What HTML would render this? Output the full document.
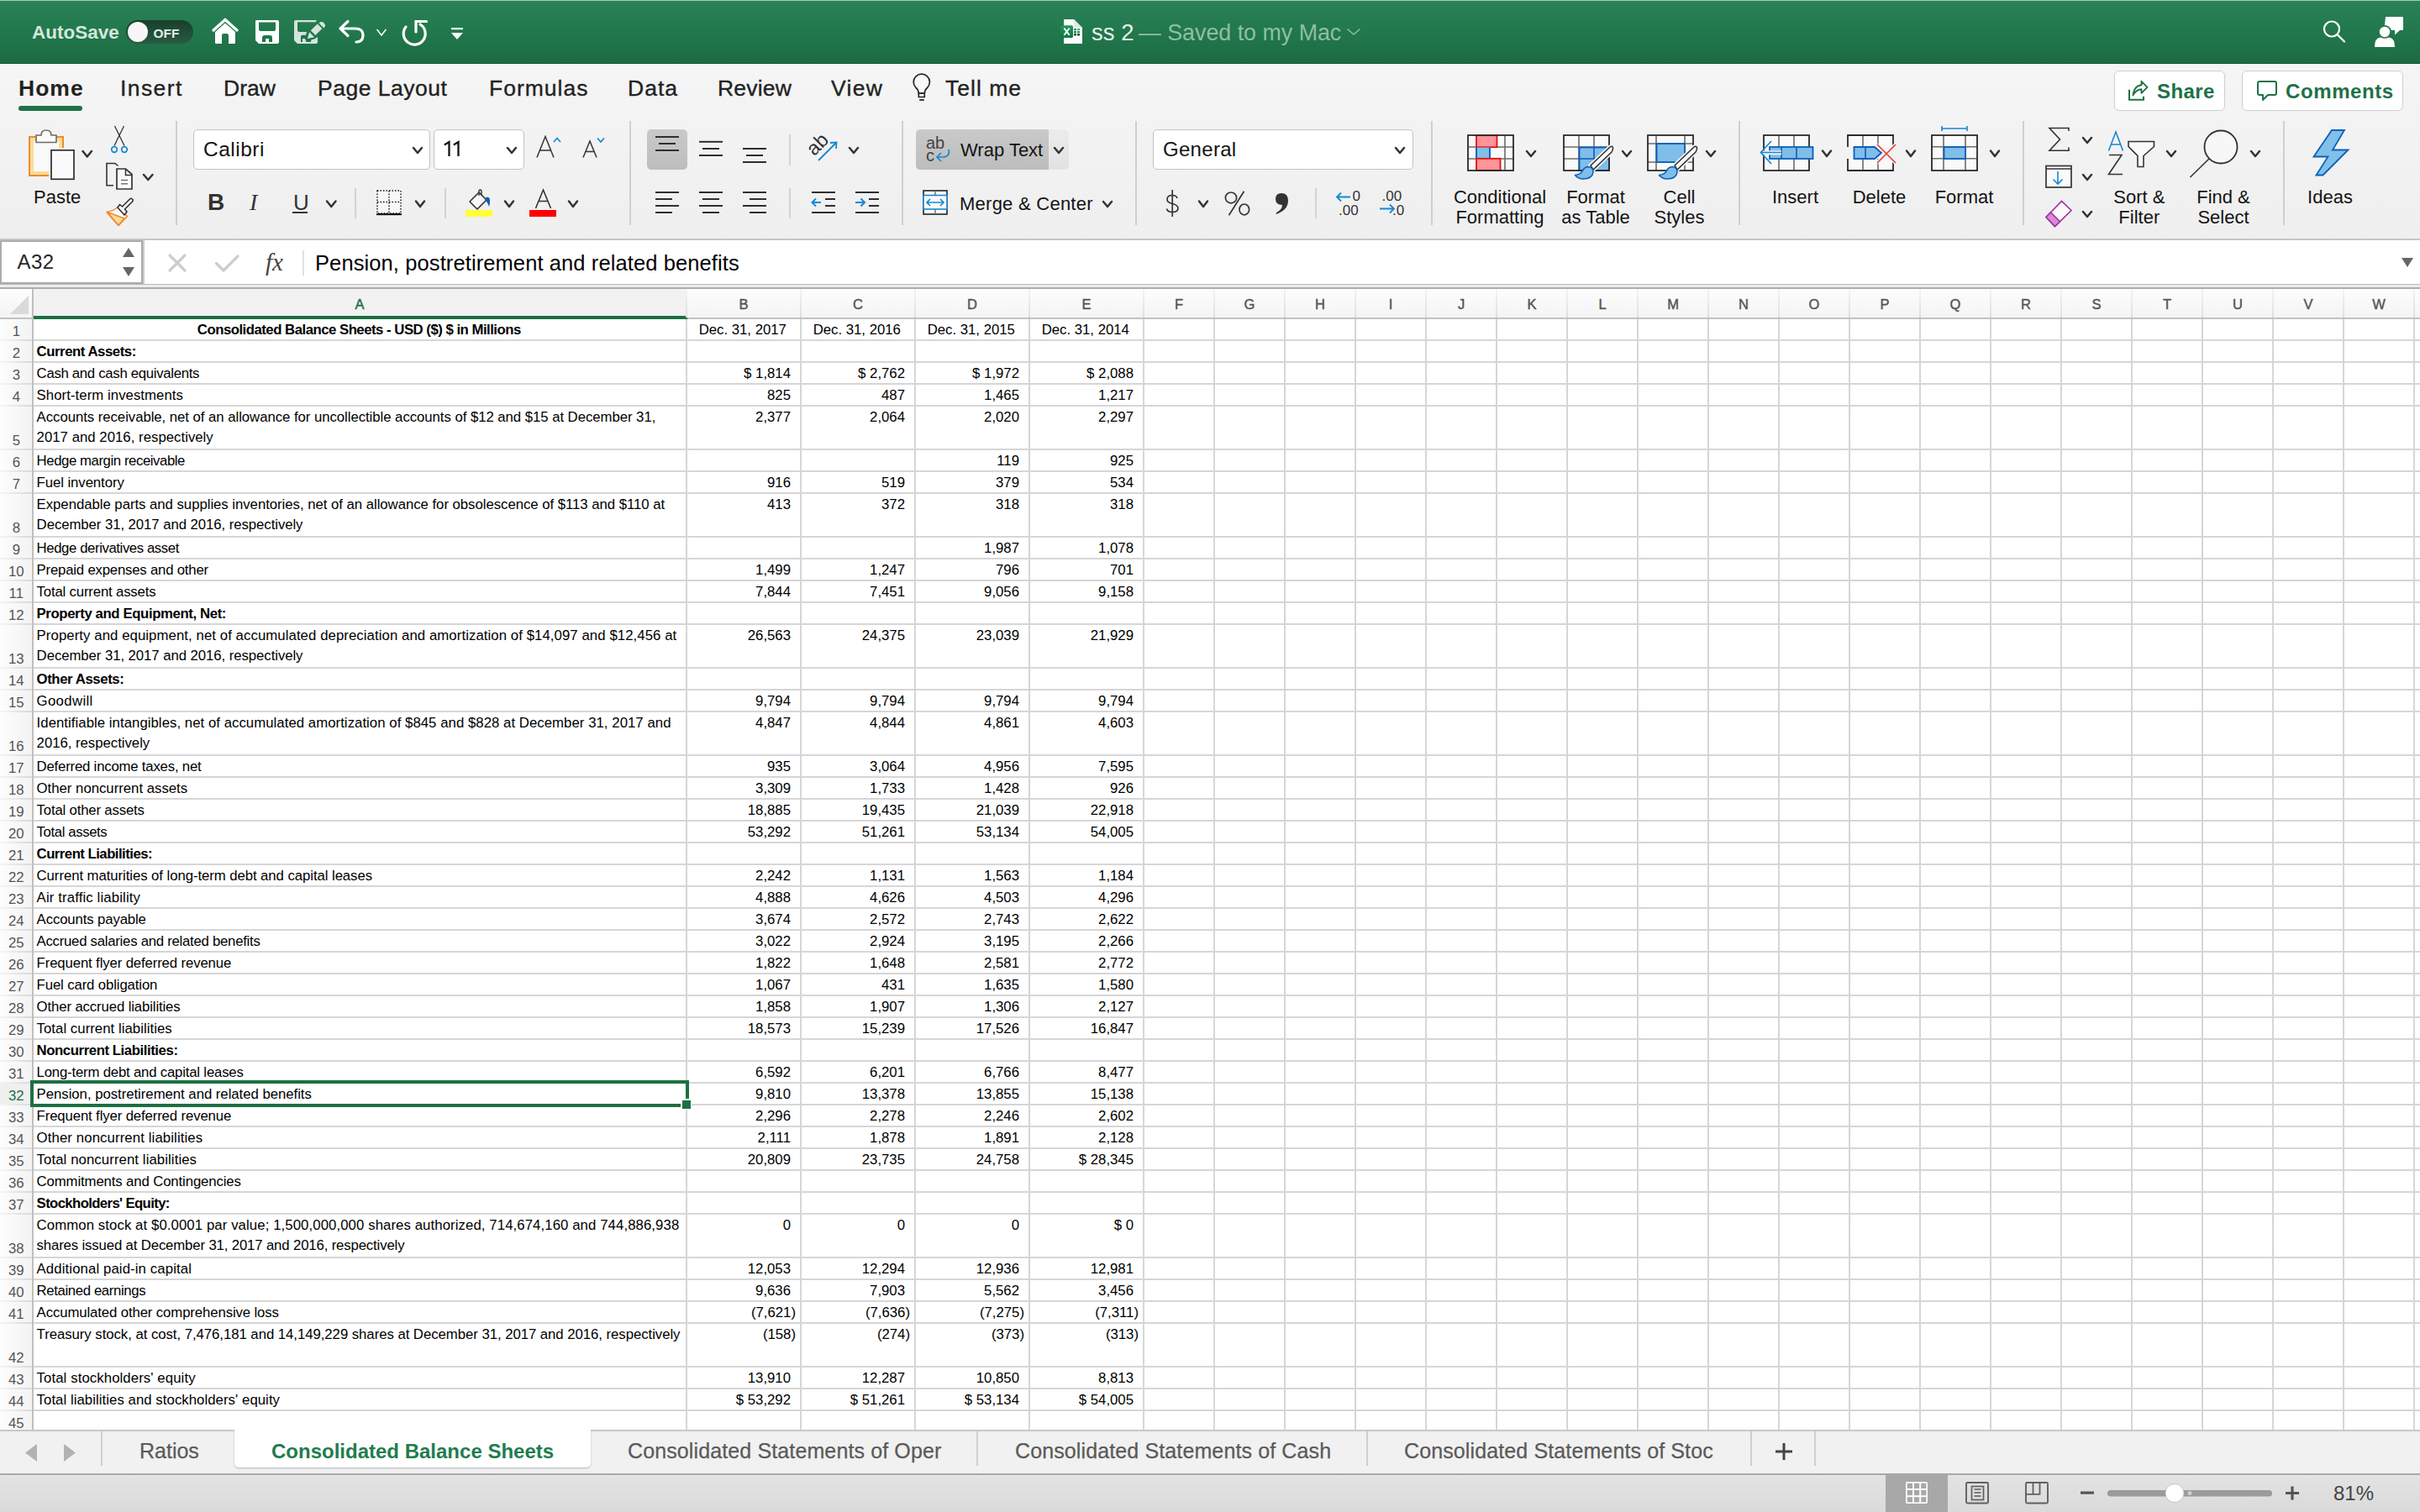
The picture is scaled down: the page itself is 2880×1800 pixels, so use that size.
<!DOCTYPE html>
<html><head><meta charset="utf-8"><style>
html,body{margin:0;padding:0;}
body{width:2880px;height:1800px;position:relative;overflow:hidden;background:#fff;font-family:"Liberation Sans",sans-serif;}
.t{position:absolute;white-space:pre;}
.r{position:absolute;}
svg.r{overflow:visible;}
</style></head><body>
<div class="r" style="left:0px;top:0px;width:2880px;height:76px;background:linear-gradient(#2c8258 0%,#237a4e 40%,#1c6b43 100%);"></div>
<div class="r" style="left:0px;top:0px;width:2880px;height:1px;background:#a6cbb6;"></div>
<div class="r" style="left:0px;top:75px;width:2880px;height:1px;background:#0f5632;"></div>
<div class="t" style="left:38px;top:27.75px;font-size:22.5px;line-height:22.5px;color:#d5e6dc;font-weight:bold;font-family:'Liberation Sans', sans-serif;">AutoSave</div>
<div class="t" style="left:1299px;top:25.25px;font-size:27.5px;line-height:27.5px;color:#e8f0eb;font-weight:normal;font-family:'Liberation Sans', sans-serif;">ss 2</div>
<div class="t" style="left:1355px;top:26.10px;font-size:26.8px;line-height:26.8px;color:#8fbfa3;font-weight:normal;font-family:'Liberation Sans', sans-serif;">— Saved to my Mac</div>
<div class="r" style="left:0px;top:76px;width:2880px;height:209px;background:linear-gradient(#f5f5f5,#efefef);"></div>
<div class="r" style="left:0px;top:284px;width:2880px;height:2px;background:#c6c6c6;"></div>
<div class="t" style="left:22px;top:92.25px;font-size:26.5px;line-height:26.5px;color:#222;font-weight:bold;font-family:'Liberation Sans', sans-serif;letter-spacing:1.0px;">Home</div>
<div class="t" style="left:143px;top:92.25px;font-size:26.5px;line-height:26.5px;color:#222;font-weight:normal;font-family:'Liberation Sans', sans-serif;letter-spacing:1.4px;-webkit-text-stroke:0.35px #222;">Insert</div>
<div class="t" style="left:266px;top:92.25px;font-size:26.5px;line-height:26.5px;color:#222;font-weight:normal;font-family:'Liberation Sans', sans-serif;letter-spacing:0px;-webkit-text-stroke:0.35px #222;">Draw</div>
<div class="t" style="left:378px;top:92.25px;font-size:26.5px;line-height:26.5px;color:#222;font-weight:normal;font-family:'Liberation Sans', sans-serif;letter-spacing:0.5px;-webkit-text-stroke:0.35px #222;">Page Layout</div>
<div class="t" style="left:582px;top:92.25px;font-size:26.5px;line-height:26.5px;color:#222;font-weight:normal;font-family:'Liberation Sans', sans-serif;letter-spacing:1.0px;-webkit-text-stroke:0.35px #222;">Formulas</div>
<div class="t" style="left:747px;top:92.25px;font-size:26.5px;line-height:26.5px;color:#222;font-weight:normal;font-family:'Liberation Sans', sans-serif;letter-spacing:1.0px;-webkit-text-stroke:0.35px #222;">Data</div>
<div class="t" style="left:854px;top:92.25px;font-size:26.5px;line-height:26.5px;color:#222;font-weight:normal;font-family:'Liberation Sans', sans-serif;letter-spacing:0.2px;-webkit-text-stroke:0.35px #222;">Review</div>
<div class="t" style="left:989px;top:92.25px;font-size:26.5px;line-height:26.5px;color:#222;font-weight:normal;font-family:'Liberation Sans', sans-serif;letter-spacing:1.3px;-webkit-text-stroke:0.35px #222;">View</div>
<div class="t" style="left:1125px;top:92.25px;font-size:26.5px;line-height:26.5px;color:#222;font-weight:normal;font-family:'Liberation Sans', sans-serif;letter-spacing:1.0px;-webkit-text-stroke:0.35px #222;">Tell me</div>
<div class="r" style="left:22px;top:126px;width:76px;height:6px;background:#1e7145;border-radius:3px;"></div>
<div class="r" style="left:0px;top:286px;width:2880px;height:52px;background:#fff;"></div>
<div class="r" style="left:0px;top:338px;width:2880px;height:1px;background:#b9b9b9;"></div>
<div class="r" style="left:0px;top:339px;width:2880px;height:3px;background:#ececec;"></div>
<div class="r" style="left:0px;top:342px;width:2880px;height:2px;background:#acacac;"></div>
<div class="r" style="left:0px;top:286px;width:170px;height:52px;background:#fff;box-sizing:border-box;border:2px solid #ababab;"></div>
<div class="r" style="left:170px;top:286px;width:2px;height:52px;background:#cbcbcb;"></div>
<div class="t" style="left:20.5px;top:300.00px;font-size:24px;line-height:24px;color:#262626;font-weight:normal;font-family:'Liberation Sans', sans-serif;letter-spacing:0.4px;">A32</div>
<div class="t" style="left:375px;top:300.75px;font-size:25.5px;line-height:25.5px;color:#000;font-weight:normal;font-family:'Liberation Sans', sans-serif;letter-spacing:0.1px;">Pension, postretirement and related benefits</div>
<div class="r" style="left:0px;top:344px;width:2880px;height:34px;background:linear-gradient(#fdfdfd,#f4f4f4);"></div>
<div class="r" style="left:40px;top:344px;width:776px;height:32px;background:#f2f2f2;"></div>
<div class="r" style="left:0px;top:378px;width:2880px;height:2px;background:#c2c2c2;"></div>
<div class="r" style="left:40px;top:376px;width:778px;height:4px;background:#1d7044;"></div>
<div class="r" style="left:38px;top:344px;width:2px;height:1358px;background:#bfbfbf;"></div>
<svg class="r" style="left:12px;top:352px" width="22" height="22" viewBox="0 0 22 22"><polygon points="22,0 22,22 0,22" fill="#dadada"/></svg>
<div class="r" style="left:816px;top:344px;width:2px;height:34px;background:linear-gradient(#f4f4f4,#dedede);"></div>
<div class="r" style="left:952px;top:344px;width:2px;height:34px;background:linear-gradient(#f4f4f4,#dedede);"></div>
<div class="r" style="left:1088px;top:344px;width:2px;height:34px;background:linear-gradient(#f4f4f4,#dedede);"></div>
<div class="r" style="left:1224px;top:344px;width:2px;height:34px;background:linear-gradient(#f4f4f4,#dedede);"></div>
<div class="r" style="left:1360px;top:344px;width:2px;height:34px;background:linear-gradient(#f4f4f4,#dedede);"></div>
<div class="r" style="left:1444px;top:344px;width:2px;height:34px;background:linear-gradient(#f4f4f4,#dedede);"></div>
<div class="r" style="left:1528px;top:344px;width:2px;height:34px;background:linear-gradient(#f4f4f4,#dedede);"></div>
<div class="r" style="left:1612px;top:344px;width:2px;height:34px;background:linear-gradient(#f4f4f4,#dedede);"></div>
<div class="r" style="left:1696px;top:344px;width:2px;height:34px;background:linear-gradient(#f4f4f4,#dedede);"></div>
<div class="r" style="left:1780px;top:344px;width:2px;height:34px;background:linear-gradient(#f4f4f4,#dedede);"></div>
<div class="r" style="left:1864px;top:344px;width:2px;height:34px;background:linear-gradient(#f4f4f4,#dedede);"></div>
<div class="r" style="left:1948px;top:344px;width:2px;height:34px;background:linear-gradient(#f4f4f4,#dedede);"></div>
<div class="r" style="left:2032px;top:344px;width:2px;height:34px;background:linear-gradient(#f4f4f4,#dedede);"></div>
<div class="r" style="left:2116px;top:344px;width:2px;height:34px;background:linear-gradient(#f4f4f4,#dedede);"></div>
<div class="r" style="left:2200px;top:344px;width:2px;height:34px;background:linear-gradient(#f4f4f4,#dedede);"></div>
<div class="r" style="left:2284px;top:344px;width:2px;height:34px;background:linear-gradient(#f4f4f4,#dedede);"></div>
<div class="r" style="left:2368px;top:344px;width:2px;height:34px;background:linear-gradient(#f4f4f4,#dedede);"></div>
<div class="r" style="left:2452px;top:344px;width:2px;height:34px;background:linear-gradient(#f4f4f4,#dedede);"></div>
<div class="r" style="left:2536px;top:344px;width:2px;height:34px;background:linear-gradient(#f4f4f4,#dedede);"></div>
<div class="r" style="left:2620px;top:344px;width:2px;height:34px;background:linear-gradient(#f4f4f4,#dedede);"></div>
<div class="r" style="left:2704px;top:344px;width:2px;height:34px;background:linear-gradient(#f4f4f4,#dedede);"></div>
<div class="r" style="left:2788px;top:344px;width:2px;height:34px;background:linear-gradient(#f4f4f4,#dedede);"></div>
<div class="r" style="left:2872px;top:344px;width:2px;height:34px;background:linear-gradient(#f4f4f4,#dedede);"></div>
<div class="t" style="left:-172.0px;width:1200px;text-align:center;top:354.25px;font-size:16.5px;line-height:16.5px;color:#1d7044;font-weight:normal;font-family:'Liberation Sans', sans-serif;-webkit-text-stroke:0.45px #1d7044;">A</div>
<div class="t" style="left:285.0px;width:1200px;text-align:center;top:354.25px;font-size:16.5px;line-height:16.5px;color:#555555;font-weight:normal;font-family:'Liberation Sans', sans-serif;-webkit-text-stroke:0.45px #555555;">B</div>
<div class="t" style="left:421.0px;width:1200px;text-align:center;top:354.25px;font-size:16.5px;line-height:16.5px;color:#555555;font-weight:normal;font-family:'Liberation Sans', sans-serif;-webkit-text-stroke:0.45px #555555;">C</div>
<div class="t" style="left:557.0px;width:1200px;text-align:center;top:354.25px;font-size:16.5px;line-height:16.5px;color:#555555;font-weight:normal;font-family:'Liberation Sans', sans-serif;-webkit-text-stroke:0.45px #555555;">D</div>
<div class="t" style="left:693.0px;width:1200px;text-align:center;top:354.25px;font-size:16.5px;line-height:16.5px;color:#555555;font-weight:normal;font-family:'Liberation Sans', sans-serif;-webkit-text-stroke:0.45px #555555;">E</div>
<div class="t" style="left:803.0px;width:1200px;text-align:center;top:354.25px;font-size:16.5px;line-height:16.5px;color:#555555;font-weight:normal;font-family:'Liberation Sans', sans-serif;-webkit-text-stroke:0.45px #555555;">F</div>
<div class="t" style="left:887.0px;width:1200px;text-align:center;top:354.25px;font-size:16.5px;line-height:16.5px;color:#555555;font-weight:normal;font-family:'Liberation Sans', sans-serif;-webkit-text-stroke:0.45px #555555;">G</div>
<div class="t" style="left:971.0px;width:1200px;text-align:center;top:354.25px;font-size:16.5px;line-height:16.5px;color:#555555;font-weight:normal;font-family:'Liberation Sans', sans-serif;-webkit-text-stroke:0.45px #555555;">H</div>
<div class="t" style="left:1055.0px;width:1200px;text-align:center;top:354.25px;font-size:16.5px;line-height:16.5px;color:#555555;font-weight:normal;font-family:'Liberation Sans', sans-serif;-webkit-text-stroke:0.45px #555555;">I</div>
<div class="t" style="left:1139.0px;width:1200px;text-align:center;top:354.25px;font-size:16.5px;line-height:16.5px;color:#555555;font-weight:normal;font-family:'Liberation Sans', sans-serif;-webkit-text-stroke:0.45px #555555;">J</div>
<div class="t" style="left:1223.0px;width:1200px;text-align:center;top:354.25px;font-size:16.5px;line-height:16.5px;color:#555555;font-weight:normal;font-family:'Liberation Sans', sans-serif;-webkit-text-stroke:0.45px #555555;">K</div>
<div class="t" style="left:1307.0px;width:1200px;text-align:center;top:354.25px;font-size:16.5px;line-height:16.5px;color:#555555;font-weight:normal;font-family:'Liberation Sans', sans-serif;-webkit-text-stroke:0.45px #555555;">L</div>
<div class="t" style="left:1391.0px;width:1200px;text-align:center;top:354.25px;font-size:16.5px;line-height:16.5px;color:#555555;font-weight:normal;font-family:'Liberation Sans', sans-serif;-webkit-text-stroke:0.45px #555555;">M</div>
<div class="t" style="left:1475.0px;width:1200px;text-align:center;top:354.25px;font-size:16.5px;line-height:16.5px;color:#555555;font-weight:normal;font-family:'Liberation Sans', sans-serif;-webkit-text-stroke:0.45px #555555;">N</div>
<div class="t" style="left:1559.0px;width:1200px;text-align:center;top:354.25px;font-size:16.5px;line-height:16.5px;color:#555555;font-weight:normal;font-family:'Liberation Sans', sans-serif;-webkit-text-stroke:0.45px #555555;">O</div>
<div class="t" style="left:1643.0px;width:1200px;text-align:center;top:354.25px;font-size:16.5px;line-height:16.5px;color:#555555;font-weight:normal;font-family:'Liberation Sans', sans-serif;-webkit-text-stroke:0.45px #555555;">P</div>
<div class="t" style="left:1727.0px;width:1200px;text-align:center;top:354.25px;font-size:16.5px;line-height:16.5px;color:#555555;font-weight:normal;font-family:'Liberation Sans', sans-serif;-webkit-text-stroke:0.45px #555555;">Q</div>
<div class="t" style="left:1811.0px;width:1200px;text-align:center;top:354.25px;font-size:16.5px;line-height:16.5px;color:#555555;font-weight:normal;font-family:'Liberation Sans', sans-serif;-webkit-text-stroke:0.45px #555555;">R</div>
<div class="t" style="left:1895.0px;width:1200px;text-align:center;top:354.25px;font-size:16.5px;line-height:16.5px;color:#555555;font-weight:normal;font-family:'Liberation Sans', sans-serif;-webkit-text-stroke:0.45px #555555;">S</div>
<div class="t" style="left:1979.0px;width:1200px;text-align:center;top:354.25px;font-size:16.5px;line-height:16.5px;color:#555555;font-weight:normal;font-family:'Liberation Sans', sans-serif;-webkit-text-stroke:0.45px #555555;">T</div>
<div class="t" style="left:2063.0px;width:1200px;text-align:center;top:354.25px;font-size:16.5px;line-height:16.5px;color:#555555;font-weight:normal;font-family:'Liberation Sans', sans-serif;-webkit-text-stroke:0.45px #555555;">U</div>
<div class="t" style="left:2147.0px;width:1200px;text-align:center;top:354.25px;font-size:16.5px;line-height:16.5px;color:#555555;font-weight:normal;font-family:'Liberation Sans', sans-serif;-webkit-text-stroke:0.45px #555555;">V</div>
<div class="t" style="left:2231.0px;width:1200px;text-align:center;top:354.25px;font-size:16.5px;line-height:16.5px;color:#555555;font-weight:normal;font-family:'Liberation Sans', sans-serif;-webkit-text-stroke:0.45px #555555;">W</div>
<div class="r" style="left:0px;top:380px;width:38px;height:1322px;background:linear-gradient(90deg,#fdfdfd,#f3f3f3);"></div>
<div class="r" style="left:0px;top:1290px;width:38px;height:24px;background:#efefef;"></div>
<div class="r" style="left:40px;top:404px;width:2840px;height:2px;background:#d6d6d6;"></div>
<div class="r" style="left:0px;top:404px;width:38px;height:2px;background:linear-gradient(90deg,#f6f6f6,#d8d8d8);"></div>
<div class="r" style="left:40px;top:430px;width:2840px;height:2px;background:#d6d6d6;"></div>
<div class="r" style="left:0px;top:430px;width:38px;height:2px;background:linear-gradient(90deg,#f6f6f6,#d8d8d8);"></div>
<div class="r" style="left:40px;top:456px;width:2840px;height:2px;background:#d6d6d6;"></div>
<div class="r" style="left:0px;top:456px;width:38px;height:2px;background:linear-gradient(90deg,#f6f6f6,#d8d8d8);"></div>
<div class="r" style="left:40px;top:482px;width:2840px;height:2px;background:#d6d6d6;"></div>
<div class="r" style="left:0px;top:482px;width:38px;height:2px;background:linear-gradient(90deg,#f6f6f6,#d8d8d8);"></div>
<div class="r" style="left:40px;top:534px;width:2840px;height:2px;background:#d6d6d6;"></div>
<div class="r" style="left:0px;top:534px;width:38px;height:2px;background:linear-gradient(90deg,#f6f6f6,#d8d8d8);"></div>
<div class="r" style="left:40px;top:560px;width:2840px;height:2px;background:#d6d6d6;"></div>
<div class="r" style="left:0px;top:560px;width:38px;height:2px;background:linear-gradient(90deg,#f6f6f6,#d8d8d8);"></div>
<div class="r" style="left:40px;top:586px;width:2840px;height:2px;background:#d6d6d6;"></div>
<div class="r" style="left:0px;top:586px;width:38px;height:2px;background:linear-gradient(90deg,#f6f6f6,#d8d8d8);"></div>
<div class="r" style="left:40px;top:638px;width:2840px;height:2px;background:#d6d6d6;"></div>
<div class="r" style="left:0px;top:638px;width:38px;height:2px;background:linear-gradient(90deg,#f6f6f6,#d8d8d8);"></div>
<div class="r" style="left:40px;top:664px;width:2840px;height:2px;background:#d6d6d6;"></div>
<div class="r" style="left:0px;top:664px;width:38px;height:2px;background:linear-gradient(90deg,#f6f6f6,#d8d8d8);"></div>
<div class="r" style="left:40px;top:690px;width:2840px;height:2px;background:#d6d6d6;"></div>
<div class="r" style="left:0px;top:690px;width:38px;height:2px;background:linear-gradient(90deg,#f6f6f6,#d8d8d8);"></div>
<div class="r" style="left:40px;top:716px;width:2840px;height:2px;background:#d6d6d6;"></div>
<div class="r" style="left:0px;top:716px;width:38px;height:2px;background:linear-gradient(90deg,#f6f6f6,#d8d8d8);"></div>
<div class="r" style="left:40px;top:742px;width:2840px;height:2px;background:#d6d6d6;"></div>
<div class="r" style="left:0px;top:742px;width:38px;height:2px;background:linear-gradient(90deg,#f6f6f6,#d8d8d8);"></div>
<div class="r" style="left:40px;top:794px;width:2840px;height:2px;background:#d6d6d6;"></div>
<div class="r" style="left:0px;top:794px;width:38px;height:2px;background:linear-gradient(90deg,#f6f6f6,#d8d8d8);"></div>
<div class="r" style="left:40px;top:820px;width:2840px;height:2px;background:#d6d6d6;"></div>
<div class="r" style="left:0px;top:820px;width:38px;height:2px;background:linear-gradient(90deg,#f6f6f6,#d8d8d8);"></div>
<div class="r" style="left:40px;top:846px;width:2840px;height:2px;background:#d6d6d6;"></div>
<div class="r" style="left:0px;top:846px;width:38px;height:2px;background:linear-gradient(90deg,#f6f6f6,#d8d8d8);"></div>
<div class="r" style="left:40px;top:898px;width:2840px;height:2px;background:#d6d6d6;"></div>
<div class="r" style="left:0px;top:898px;width:38px;height:2px;background:linear-gradient(90deg,#f6f6f6,#d8d8d8);"></div>
<div class="r" style="left:40px;top:924px;width:2840px;height:2px;background:#d6d6d6;"></div>
<div class="r" style="left:0px;top:924px;width:38px;height:2px;background:linear-gradient(90deg,#f6f6f6,#d8d8d8);"></div>
<div class="r" style="left:40px;top:950px;width:2840px;height:2px;background:#d6d6d6;"></div>
<div class="r" style="left:0px;top:950px;width:38px;height:2px;background:linear-gradient(90deg,#f6f6f6,#d8d8d8);"></div>
<div class="r" style="left:40px;top:976px;width:2840px;height:2px;background:#d6d6d6;"></div>
<div class="r" style="left:0px;top:976px;width:38px;height:2px;background:linear-gradient(90deg,#f6f6f6,#d8d8d8);"></div>
<div class="r" style="left:40px;top:1002px;width:2840px;height:2px;background:#d6d6d6;"></div>
<div class="r" style="left:0px;top:1002px;width:38px;height:2px;background:linear-gradient(90deg,#f6f6f6,#d8d8d8);"></div>
<div class="r" style="left:40px;top:1028px;width:2840px;height:2px;background:#d6d6d6;"></div>
<div class="r" style="left:0px;top:1028px;width:38px;height:2px;background:linear-gradient(90deg,#f6f6f6,#d8d8d8);"></div>
<div class="r" style="left:40px;top:1054px;width:2840px;height:2px;background:#d6d6d6;"></div>
<div class="r" style="left:0px;top:1054px;width:38px;height:2px;background:linear-gradient(90deg,#f6f6f6,#d8d8d8);"></div>
<div class="r" style="left:40px;top:1080px;width:2840px;height:2px;background:#d6d6d6;"></div>
<div class="r" style="left:0px;top:1080px;width:38px;height:2px;background:linear-gradient(90deg,#f6f6f6,#d8d8d8);"></div>
<div class="r" style="left:40px;top:1106px;width:2840px;height:2px;background:#d6d6d6;"></div>
<div class="r" style="left:0px;top:1106px;width:38px;height:2px;background:linear-gradient(90deg,#f6f6f6,#d8d8d8);"></div>
<div class="r" style="left:40px;top:1132px;width:2840px;height:2px;background:#d6d6d6;"></div>
<div class="r" style="left:0px;top:1132px;width:38px;height:2px;background:linear-gradient(90deg,#f6f6f6,#d8d8d8);"></div>
<div class="r" style="left:40px;top:1158px;width:2840px;height:2px;background:#d6d6d6;"></div>
<div class="r" style="left:0px;top:1158px;width:38px;height:2px;background:linear-gradient(90deg,#f6f6f6,#d8d8d8);"></div>
<div class="r" style="left:40px;top:1184px;width:2840px;height:2px;background:#d6d6d6;"></div>
<div class="r" style="left:0px;top:1184px;width:38px;height:2px;background:linear-gradient(90deg,#f6f6f6,#d8d8d8);"></div>
<div class="r" style="left:40px;top:1210px;width:2840px;height:2px;background:#d6d6d6;"></div>
<div class="r" style="left:0px;top:1210px;width:38px;height:2px;background:linear-gradient(90deg,#f6f6f6,#d8d8d8);"></div>
<div class="r" style="left:40px;top:1236px;width:2840px;height:2px;background:#d6d6d6;"></div>
<div class="r" style="left:0px;top:1236px;width:38px;height:2px;background:linear-gradient(90deg,#f6f6f6,#d8d8d8);"></div>
<div class="r" style="left:40px;top:1262px;width:2840px;height:2px;background:#d6d6d6;"></div>
<div class="r" style="left:0px;top:1262px;width:38px;height:2px;background:linear-gradient(90deg,#f6f6f6,#d8d8d8);"></div>
<div class="r" style="left:40px;top:1288px;width:2840px;height:2px;background:#d6d6d6;"></div>
<div class="r" style="left:0px;top:1288px;width:38px;height:2px;background:linear-gradient(90deg,#f6f6f6,#d8d8d8);"></div>
<div class="r" style="left:40px;top:1314px;width:2840px;height:2px;background:#d6d6d6;"></div>
<div class="r" style="left:0px;top:1314px;width:38px;height:2px;background:linear-gradient(90deg,#f6f6f6,#d8d8d8);"></div>
<div class="r" style="left:40px;top:1340px;width:2840px;height:2px;background:#d6d6d6;"></div>
<div class="r" style="left:0px;top:1340px;width:38px;height:2px;background:linear-gradient(90deg,#f6f6f6,#d8d8d8);"></div>
<div class="r" style="left:40px;top:1366px;width:2840px;height:2px;background:#d6d6d6;"></div>
<div class="r" style="left:0px;top:1366px;width:38px;height:2px;background:linear-gradient(90deg,#f6f6f6,#d8d8d8);"></div>
<div class="r" style="left:40px;top:1392px;width:2840px;height:2px;background:#d6d6d6;"></div>
<div class="r" style="left:0px;top:1392px;width:38px;height:2px;background:linear-gradient(90deg,#f6f6f6,#d8d8d8);"></div>
<div class="r" style="left:40px;top:1418px;width:2840px;height:2px;background:#d6d6d6;"></div>
<div class="r" style="left:0px;top:1418px;width:38px;height:2px;background:linear-gradient(90deg,#f6f6f6,#d8d8d8);"></div>
<div class="r" style="left:40px;top:1444px;width:2840px;height:2px;background:#d6d6d6;"></div>
<div class="r" style="left:0px;top:1444px;width:38px;height:2px;background:linear-gradient(90deg,#f6f6f6,#d8d8d8);"></div>
<div class="r" style="left:40px;top:1496px;width:2840px;height:2px;background:#d6d6d6;"></div>
<div class="r" style="left:0px;top:1496px;width:38px;height:2px;background:linear-gradient(90deg,#f6f6f6,#d8d8d8);"></div>
<div class="r" style="left:40px;top:1522px;width:2840px;height:2px;background:#d6d6d6;"></div>
<div class="r" style="left:0px;top:1522px;width:38px;height:2px;background:linear-gradient(90deg,#f6f6f6,#d8d8d8);"></div>
<div class="r" style="left:40px;top:1548px;width:2840px;height:2px;background:#d6d6d6;"></div>
<div class="r" style="left:0px;top:1548px;width:38px;height:2px;background:linear-gradient(90deg,#f6f6f6,#d8d8d8);"></div>
<div class="r" style="left:40px;top:1574px;width:2840px;height:2px;background:#d6d6d6;"></div>
<div class="r" style="left:0px;top:1574px;width:38px;height:2px;background:linear-gradient(90deg,#f6f6f6,#d8d8d8);"></div>
<div class="r" style="left:40px;top:1626px;width:2840px;height:2px;background:#d6d6d6;"></div>
<div class="r" style="left:0px;top:1626px;width:38px;height:2px;background:linear-gradient(90deg,#f6f6f6,#d8d8d8);"></div>
<div class="r" style="left:40px;top:1652px;width:2840px;height:2px;background:#d6d6d6;"></div>
<div class="r" style="left:0px;top:1652px;width:38px;height:2px;background:linear-gradient(90deg,#f6f6f6,#d8d8d8);"></div>
<div class="r" style="left:40px;top:1678px;width:2840px;height:2px;background:#d6d6d6;"></div>
<div class="r" style="left:0px;top:1678px;width:38px;height:2px;background:linear-gradient(90deg,#f6f6f6,#d8d8d8);"></div>
<div class="r" style="left:816px;top:380px;width:2px;height:1322px;background:#d6d6d6;"></div>
<div class="r" style="left:952px;top:380px;width:2px;height:1322px;background:#d6d6d6;"></div>
<div class="r" style="left:1088px;top:380px;width:2px;height:1322px;background:#d6d6d6;"></div>
<div class="r" style="left:1224px;top:380px;width:2px;height:1322px;background:#d6d6d6;"></div>
<div class="r" style="left:1360px;top:380px;width:2px;height:1322px;background:#d6d6d6;"></div>
<div class="r" style="left:1444px;top:380px;width:2px;height:1322px;background:#d6d6d6;"></div>
<div class="r" style="left:1528px;top:380px;width:2px;height:1322px;background:#d6d6d6;"></div>
<div class="r" style="left:1612px;top:380px;width:2px;height:1322px;background:#d6d6d6;"></div>
<div class="r" style="left:1696px;top:380px;width:2px;height:1322px;background:#d6d6d6;"></div>
<div class="r" style="left:1780px;top:380px;width:2px;height:1322px;background:#d6d6d6;"></div>
<div class="r" style="left:1864px;top:380px;width:2px;height:1322px;background:#d6d6d6;"></div>
<div class="r" style="left:1948px;top:380px;width:2px;height:1322px;background:#d6d6d6;"></div>
<div class="r" style="left:2032px;top:380px;width:2px;height:1322px;background:#d6d6d6;"></div>
<div class="r" style="left:2116px;top:380px;width:2px;height:1322px;background:#d6d6d6;"></div>
<div class="r" style="left:2200px;top:380px;width:2px;height:1322px;background:#d6d6d6;"></div>
<div class="r" style="left:2284px;top:380px;width:2px;height:1322px;background:#d6d6d6;"></div>
<div class="r" style="left:2368px;top:380px;width:2px;height:1322px;background:#d6d6d6;"></div>
<div class="r" style="left:2452px;top:380px;width:2px;height:1322px;background:#d6d6d6;"></div>
<div class="r" style="left:2536px;top:380px;width:2px;height:1322px;background:#d6d6d6;"></div>
<div class="r" style="left:2620px;top:380px;width:2px;height:1322px;background:#d6d6d6;"></div>
<div class="r" style="left:2704px;top:380px;width:2px;height:1322px;background:#d6d6d6;"></div>
<div class="r" style="left:2788px;top:380px;width:2px;height:1322px;background:#d6d6d6;"></div>
<div class="r" style="left:2872px;top:380px;width:2px;height:1322px;background:#d6d6d6;"></div>
<div class="t" style="left:-580.7px;width:1200px;text-align:center;top:386.62px;font-size:16.75px;line-height:16.75px;color:#555;font-weight:normal;font-family:'Liberation Sans', sans-serif;">1</div>
<div class="t" style="left:-580.7px;width:1200px;text-align:center;top:412.62px;font-size:16.75px;line-height:16.75px;color:#555;font-weight:normal;font-family:'Liberation Sans', sans-serif;">2</div>
<div class="t" style="left:-580.7px;width:1200px;text-align:center;top:438.62px;font-size:16.75px;line-height:16.75px;color:#555;font-weight:normal;font-family:'Liberation Sans', sans-serif;">3</div>
<div class="t" style="left:-580.7px;width:1200px;text-align:center;top:464.62px;font-size:16.75px;line-height:16.75px;color:#555;font-weight:normal;font-family:'Liberation Sans', sans-serif;">4</div>
<div class="t" style="left:-580.7px;width:1200px;text-align:center;top:516.62px;font-size:16.75px;line-height:16.75px;color:#555;font-weight:normal;font-family:'Liberation Sans', sans-serif;">5</div>
<div class="t" style="left:-580.7px;width:1200px;text-align:center;top:542.62px;font-size:16.75px;line-height:16.75px;color:#555;font-weight:normal;font-family:'Liberation Sans', sans-serif;">6</div>
<div class="t" style="left:-580.7px;width:1200px;text-align:center;top:568.62px;font-size:16.75px;line-height:16.75px;color:#555;font-weight:normal;font-family:'Liberation Sans', sans-serif;">7</div>
<div class="t" style="left:-580.7px;width:1200px;text-align:center;top:620.62px;font-size:16.75px;line-height:16.75px;color:#555;font-weight:normal;font-family:'Liberation Sans', sans-serif;">8</div>
<div class="t" style="left:-580.7px;width:1200px;text-align:center;top:646.62px;font-size:16.75px;line-height:16.75px;color:#555;font-weight:normal;font-family:'Liberation Sans', sans-serif;">9</div>
<div class="t" style="left:-580.7px;width:1200px;text-align:center;top:672.62px;font-size:16.75px;line-height:16.75px;color:#555;font-weight:normal;font-family:'Liberation Sans', sans-serif;">10</div>
<div class="t" style="left:-580.7px;width:1200px;text-align:center;top:698.62px;font-size:16.75px;line-height:16.75px;color:#555;font-weight:normal;font-family:'Liberation Sans', sans-serif;">11</div>
<div class="t" style="left:-580.7px;width:1200px;text-align:center;top:724.62px;font-size:16.75px;line-height:16.75px;color:#555;font-weight:normal;font-family:'Liberation Sans', sans-serif;">12</div>
<div class="t" style="left:-580.7px;width:1200px;text-align:center;top:776.62px;font-size:16.75px;line-height:16.75px;color:#555;font-weight:normal;font-family:'Liberation Sans', sans-serif;">13</div>
<div class="t" style="left:-580.7px;width:1200px;text-align:center;top:802.62px;font-size:16.75px;line-height:16.75px;color:#555;font-weight:normal;font-family:'Liberation Sans', sans-serif;">14</div>
<div class="t" style="left:-580.7px;width:1200px;text-align:center;top:828.62px;font-size:16.75px;line-height:16.75px;color:#555;font-weight:normal;font-family:'Liberation Sans', sans-serif;">15</div>
<div class="t" style="left:-580.7px;width:1200px;text-align:center;top:880.62px;font-size:16.75px;line-height:16.75px;color:#555;font-weight:normal;font-family:'Liberation Sans', sans-serif;">16</div>
<div class="t" style="left:-580.7px;width:1200px;text-align:center;top:906.62px;font-size:16.75px;line-height:16.75px;color:#555;font-weight:normal;font-family:'Liberation Sans', sans-serif;">17</div>
<div class="t" style="left:-580.7px;width:1200px;text-align:center;top:932.62px;font-size:16.75px;line-height:16.75px;color:#555;font-weight:normal;font-family:'Liberation Sans', sans-serif;">18</div>
<div class="t" style="left:-580.7px;width:1200px;text-align:center;top:958.62px;font-size:16.75px;line-height:16.75px;color:#555;font-weight:normal;font-family:'Liberation Sans', sans-serif;">19</div>
<div class="t" style="left:-580.7px;width:1200px;text-align:center;top:984.62px;font-size:16.75px;line-height:16.75px;color:#555;font-weight:normal;font-family:'Liberation Sans', sans-serif;">20</div>
<div class="t" style="left:-580.7px;width:1200px;text-align:center;top:1010.62px;font-size:16.75px;line-height:16.75px;color:#555;font-weight:normal;font-family:'Liberation Sans', sans-serif;">21</div>
<div class="t" style="left:-580.7px;width:1200px;text-align:center;top:1036.62px;font-size:16.75px;line-height:16.75px;color:#555;font-weight:normal;font-family:'Liberation Sans', sans-serif;">22</div>
<div class="t" style="left:-580.7px;width:1200px;text-align:center;top:1062.62px;font-size:16.75px;line-height:16.75px;color:#555;font-weight:normal;font-family:'Liberation Sans', sans-serif;">23</div>
<div class="t" style="left:-580.7px;width:1200px;text-align:center;top:1088.62px;font-size:16.75px;line-height:16.75px;color:#555;font-weight:normal;font-family:'Liberation Sans', sans-serif;">24</div>
<div class="t" style="left:-580.7px;width:1200px;text-align:center;top:1114.62px;font-size:16.75px;line-height:16.75px;color:#555;font-weight:normal;font-family:'Liberation Sans', sans-serif;">25</div>
<div class="t" style="left:-580.7px;width:1200px;text-align:center;top:1140.62px;font-size:16.75px;line-height:16.75px;color:#555;font-weight:normal;font-family:'Liberation Sans', sans-serif;">26</div>
<div class="t" style="left:-580.7px;width:1200px;text-align:center;top:1166.62px;font-size:16.75px;line-height:16.75px;color:#555;font-weight:normal;font-family:'Liberation Sans', sans-serif;">27</div>
<div class="t" style="left:-580.7px;width:1200px;text-align:center;top:1192.62px;font-size:16.75px;line-height:16.75px;color:#555;font-weight:normal;font-family:'Liberation Sans', sans-serif;">28</div>
<div class="t" style="left:-580.7px;width:1200px;text-align:center;top:1218.62px;font-size:16.75px;line-height:16.75px;color:#555;font-weight:normal;font-family:'Liberation Sans', sans-serif;">29</div>
<div class="t" style="left:-580.7px;width:1200px;text-align:center;top:1244.62px;font-size:16.75px;line-height:16.75px;color:#555;font-weight:normal;font-family:'Liberation Sans', sans-serif;">30</div>
<div class="t" style="left:-580.7px;width:1200px;text-align:center;top:1270.62px;font-size:16.75px;line-height:16.75px;color:#555;font-weight:normal;font-family:'Liberation Sans', sans-serif;">31</div>
<div class="t" style="left:-580.7px;width:1200px;text-align:center;top:1296.62px;font-size:16.75px;line-height:16.75px;color:#1d7044;font-weight:normal;font-family:'Liberation Sans', sans-serif;">32</div>
<div class="t" style="left:-580.7px;width:1200px;text-align:center;top:1322.62px;font-size:16.75px;line-height:16.75px;color:#555;font-weight:normal;font-family:'Liberation Sans', sans-serif;">33</div>
<div class="t" style="left:-580.7px;width:1200px;text-align:center;top:1348.62px;font-size:16.75px;line-height:16.75px;color:#555;font-weight:normal;font-family:'Liberation Sans', sans-serif;">34</div>
<div class="t" style="left:-580.7px;width:1200px;text-align:center;top:1374.62px;font-size:16.75px;line-height:16.75px;color:#555;font-weight:normal;font-family:'Liberation Sans', sans-serif;">35</div>
<div class="t" style="left:-580.7px;width:1200px;text-align:center;top:1400.62px;font-size:16.75px;line-height:16.75px;color:#555;font-weight:normal;font-family:'Liberation Sans', sans-serif;">36</div>
<div class="t" style="left:-580.7px;width:1200px;text-align:center;top:1426.62px;font-size:16.75px;line-height:16.75px;color:#555;font-weight:normal;font-family:'Liberation Sans', sans-serif;">37</div>
<div class="t" style="left:-580.7px;width:1200px;text-align:center;top:1478.62px;font-size:16.75px;line-height:16.75px;color:#555;font-weight:normal;font-family:'Liberation Sans', sans-serif;">38</div>
<div class="t" style="left:-580.7px;width:1200px;text-align:center;top:1504.62px;font-size:16.75px;line-height:16.75px;color:#555;font-weight:normal;font-family:'Liberation Sans', sans-serif;">39</div>
<div class="t" style="left:-580.7px;width:1200px;text-align:center;top:1530.62px;font-size:16.75px;line-height:16.75px;color:#555;font-weight:normal;font-family:'Liberation Sans', sans-serif;">40</div>
<div class="t" style="left:-580.7px;width:1200px;text-align:center;top:1556.62px;font-size:16.75px;line-height:16.75px;color:#555;font-weight:normal;font-family:'Liberation Sans', sans-serif;">41</div>
<div class="t" style="left:-580.7px;width:1200px;text-align:center;top:1608.62px;font-size:16.75px;line-height:16.75px;color:#555;font-weight:normal;font-family:'Liberation Sans', sans-serif;">42</div>
<div class="t" style="left:-580.7px;width:1200px;text-align:center;top:1634.62px;font-size:16.75px;line-height:16.75px;color:#555;font-weight:normal;font-family:'Liberation Sans', sans-serif;">43</div>
<div class="t" style="left:-580.7px;width:1200px;text-align:center;top:1660.62px;font-size:16.75px;line-height:16.75px;color:#555;font-weight:normal;font-family:'Liberation Sans', sans-serif;">44</div>
<div class="t" style="left:-580.7px;width:1200px;text-align:center;top:1686.62px;font-size:16.75px;line-height:16.75px;color:#555;font-weight:normal;font-family:'Liberation Sans', sans-serif;">45</div>
<div class="t" style="left:-172.7px;width:1200px;text-align:center;top:384.62px;font-size:16.75px;line-height:16.75px;color:#000;font-weight:bold;font-family:'Liberation Sans', sans-serif;letter-spacing:-0.5px;">Consolidated Balance Sheets - USD ($) $ in Millions</div>
<div class="t" style="left:283.79999999999995px;width:1200px;text-align:center;top:384.62px;font-size:16.75px;line-height:16.75px;color:#000;font-weight:normal;font-family:'Liberation Sans', sans-serif;">Dec. 31, 2017</div>
<div class="t" style="left:419.79999999999995px;width:1200px;text-align:center;top:384.62px;font-size:16.75px;line-height:16.75px;color:#000;font-weight:normal;font-family:'Liberation Sans', sans-serif;">Dec. 31, 2016</div>
<div class="t" style="left:555.8px;width:1200px;text-align:center;top:384.62px;font-size:16.75px;line-height:16.75px;color:#000;font-weight:normal;font-family:'Liberation Sans', sans-serif;">Dec. 31, 2015</div>
<div class="t" style="left:691.8px;width:1200px;text-align:center;top:384.62px;font-size:16.75px;line-height:16.75px;color:#000;font-weight:normal;font-family:'Liberation Sans', sans-serif;">Dec. 31, 2014</div>
<div class="t" style="left:43.6px;top:410.62px;font-size:16.75px;line-height:16.75px;color:#000;font-weight:bold;font-family:'Liberation Sans', sans-serif;letter-spacing:-0.458px;">Current Assets:</div>
<div class="t" style="left:43.6px;top:436.62px;font-size:16.75px;line-height:16.75px;color:#000;font-weight:normal;font-family:'Liberation Sans', sans-serif;letter-spacing:-0.303px;">Cash and cash equivalents</div>
<div class="t" style="right:1939px;top:436.62px;font-size:16.75px;line-height:16.75px;color:#000;font-weight:normal;font-family:'Liberation Sans', sans-serif;">$ 1,814</div>
<div class="t" style="right:1803px;top:436.62px;font-size:16.75px;line-height:16.75px;color:#000;font-weight:normal;font-family:'Liberation Sans', sans-serif;">$ 2,762</div>
<div class="t" style="right:1667px;top:436.62px;font-size:16.75px;line-height:16.75px;color:#000;font-weight:normal;font-family:'Liberation Sans', sans-serif;">$ 1,972</div>
<div class="t" style="right:1531px;top:436.62px;font-size:16.75px;line-height:16.75px;color:#000;font-weight:normal;font-family:'Liberation Sans', sans-serif;">$ 2,088</div>
<div class="t" style="left:43.6px;top:462.62px;font-size:16.75px;line-height:16.75px;color:#000;font-weight:normal;font-family:'Liberation Sans', sans-serif;letter-spacing:0.057px;">Short-term investments</div>
<div class="t" style="right:1939px;top:462.62px;font-size:16.75px;line-height:16.75px;color:#000;font-weight:normal;font-family:'Liberation Sans', sans-serif;">825</div>
<div class="t" style="right:1803px;top:462.62px;font-size:16.75px;line-height:16.75px;color:#000;font-weight:normal;font-family:'Liberation Sans', sans-serif;">487</div>
<div class="t" style="right:1667px;top:462.62px;font-size:16.75px;line-height:16.75px;color:#000;font-weight:normal;font-family:'Liberation Sans', sans-serif;">1,465</div>
<div class="t" style="right:1531px;top:462.62px;font-size:16.75px;line-height:16.75px;color:#000;font-weight:normal;font-family:'Liberation Sans', sans-serif;">1,217</div>
<div class="t" style="left:43.6px;top:488.62px;font-size:16.75px;line-height:16.75px;color:#000;font-weight:normal;font-family:'Liberation Sans', sans-serif;letter-spacing:-0.046px;">Accounts receivable, net of an allowance for uncollectible accounts of $12 and $15 at December 31,</div>
<div class="t" style="left:43.6px;top:512.62px;font-size:16.75px;line-height:16.75px;color:#000;font-weight:normal;font-family:'Liberation Sans', sans-serif;letter-spacing:0.024px;">2017 and 2016, respectively</div>
<div class="t" style="right:1939px;top:488.62px;font-size:16.75px;line-height:16.75px;color:#000;font-weight:normal;font-family:'Liberation Sans', sans-serif;">2,377</div>
<div class="t" style="right:1803px;top:488.62px;font-size:16.75px;line-height:16.75px;color:#000;font-weight:normal;font-family:'Liberation Sans', sans-serif;">2,064</div>
<div class="t" style="right:1667px;top:488.62px;font-size:16.75px;line-height:16.75px;color:#000;font-weight:normal;font-family:'Liberation Sans', sans-serif;">2,020</div>
<div class="t" style="right:1531px;top:488.62px;font-size:16.75px;line-height:16.75px;color:#000;font-weight:normal;font-family:'Liberation Sans', sans-serif;">2,297</div>
<div class="t" style="left:43.6px;top:540.62px;font-size:16.75px;line-height:16.75px;color:#000;font-weight:normal;font-family:'Liberation Sans', sans-serif;letter-spacing:-0.427px;">Hedge margin receivable</div>
<div class="t" style="right:1667px;top:540.62px;font-size:16.75px;line-height:16.75px;color:#000;font-weight:normal;font-family:'Liberation Sans', sans-serif;">119</div>
<div class="t" style="right:1531px;top:540.62px;font-size:16.75px;line-height:16.75px;color:#000;font-weight:normal;font-family:'Liberation Sans', sans-serif;">925</div>
<div class="t" style="left:43.6px;top:566.62px;font-size:16.75px;line-height:16.75px;color:#000;font-weight:normal;font-family:'Liberation Sans', sans-serif;letter-spacing:-0.077px;">Fuel inventory</div>
<div class="t" style="right:1939px;top:566.62px;font-size:16.75px;line-height:16.75px;color:#000;font-weight:normal;font-family:'Liberation Sans', sans-serif;">916</div>
<div class="t" style="right:1803px;top:566.62px;font-size:16.75px;line-height:16.75px;color:#000;font-weight:normal;font-family:'Liberation Sans', sans-serif;">519</div>
<div class="t" style="right:1667px;top:566.62px;font-size:16.75px;line-height:16.75px;color:#000;font-weight:normal;font-family:'Liberation Sans', sans-serif;">379</div>
<div class="t" style="right:1531px;top:566.62px;font-size:16.75px;line-height:16.75px;color:#000;font-weight:normal;font-family:'Liberation Sans', sans-serif;">534</div>
<div class="t" style="left:43.6px;top:592.62px;font-size:16.75px;line-height:16.75px;color:#000;font-weight:normal;font-family:'Liberation Sans', sans-serif;letter-spacing:-0.034px;">Expendable parts and supplies inventories, net of an allowance for obsolescence of $113 and $110 at</div>
<div class="t" style="left:43.6px;top:616.62px;font-size:16.75px;line-height:16.75px;color:#000;font-weight:normal;font-family:'Liberation Sans', sans-serif;letter-spacing:-0.064px;">December 31, 2017 and 2016, respectively</div>
<div class="t" style="right:1939px;top:592.62px;font-size:16.75px;line-height:16.75px;color:#000;font-weight:normal;font-family:'Liberation Sans', sans-serif;">413</div>
<div class="t" style="right:1803px;top:592.62px;font-size:16.75px;line-height:16.75px;color:#000;font-weight:normal;font-family:'Liberation Sans', sans-serif;">372</div>
<div class="t" style="right:1667px;top:592.62px;font-size:16.75px;line-height:16.75px;color:#000;font-weight:normal;font-family:'Liberation Sans', sans-serif;">318</div>
<div class="t" style="right:1531px;top:592.62px;font-size:16.75px;line-height:16.75px;color:#000;font-weight:normal;font-family:'Liberation Sans', sans-serif;">318</div>
<div class="t" style="left:43.6px;top:644.62px;font-size:16.75px;line-height:16.75px;color:#000;font-weight:normal;font-family:'Liberation Sans', sans-serif;letter-spacing:-0.409px;">Hedge derivatives asset</div>
<div class="t" style="right:1667px;top:644.62px;font-size:16.75px;line-height:16.75px;color:#000;font-weight:normal;font-family:'Liberation Sans', sans-serif;">1,987</div>
<div class="t" style="right:1531px;top:644.62px;font-size:16.75px;line-height:16.75px;color:#000;font-weight:normal;font-family:'Liberation Sans', sans-serif;">1,078</div>
<div class="t" style="left:43.6px;top:670.62px;font-size:16.75px;line-height:16.75px;color:#000;font-weight:normal;font-family:'Liberation Sans', sans-serif;letter-spacing:-0.200px;">Prepaid expenses and other</div>
<div class="t" style="right:1939px;top:670.62px;font-size:16.75px;line-height:16.75px;color:#000;font-weight:normal;font-family:'Liberation Sans', sans-serif;">1,499</div>
<div class="t" style="right:1803px;top:670.62px;font-size:16.75px;line-height:16.75px;color:#000;font-weight:normal;font-family:'Liberation Sans', sans-serif;">1,247</div>
<div class="t" style="right:1667px;top:670.62px;font-size:16.75px;line-height:16.75px;color:#000;font-weight:normal;font-family:'Liberation Sans', sans-serif;">796</div>
<div class="t" style="right:1531px;top:670.62px;font-size:16.75px;line-height:16.75px;color:#000;font-weight:normal;font-family:'Liberation Sans', sans-serif;">701</div>
<div class="t" style="left:43.6px;top:696.62px;font-size:16.75px;line-height:16.75px;color:#000;font-weight:normal;font-family:'Liberation Sans', sans-serif;letter-spacing:-0.173px;">Total current assets</div>
<div class="t" style="right:1939px;top:696.62px;font-size:16.75px;line-height:16.75px;color:#000;font-weight:normal;font-family:'Liberation Sans', sans-serif;">7,844</div>
<div class="t" style="right:1803px;top:696.62px;font-size:16.75px;line-height:16.75px;color:#000;font-weight:normal;font-family:'Liberation Sans', sans-serif;">7,451</div>
<div class="t" style="right:1667px;top:696.62px;font-size:16.75px;line-height:16.75px;color:#000;font-weight:normal;font-family:'Liberation Sans', sans-serif;">9,056</div>
<div class="t" style="right:1531px;top:696.62px;font-size:16.75px;line-height:16.75px;color:#000;font-weight:normal;font-family:'Liberation Sans', sans-serif;">9,158</div>
<div class="t" style="left:43.6px;top:722.62px;font-size:16.75px;line-height:16.75px;color:#000;font-weight:bold;font-family:'Liberation Sans', sans-serif;letter-spacing:-0.392px;">Property and Equipment, Net:</div>
<div class="t" style="left:43.6px;top:748.62px;font-size:16.75px;line-height:16.75px;color:#000;font-weight:normal;font-family:'Liberation Sans', sans-serif;letter-spacing:0.076px;">Property and equipment, net of accumulated depreciation and amortization of $14,097 and $12,456 at</div>
<div class="t" style="left:43.6px;top:772.62px;font-size:16.75px;line-height:16.75px;color:#000;font-weight:normal;font-family:'Liberation Sans', sans-serif;letter-spacing:-0.064px;">December 31, 2017 and 2016, respectively</div>
<div class="t" style="right:1939px;top:748.62px;font-size:16.75px;line-height:16.75px;color:#000;font-weight:normal;font-family:'Liberation Sans', sans-serif;">26,563</div>
<div class="t" style="right:1803px;top:748.62px;font-size:16.75px;line-height:16.75px;color:#000;font-weight:normal;font-family:'Liberation Sans', sans-serif;">24,375</div>
<div class="t" style="right:1667px;top:748.62px;font-size:16.75px;line-height:16.75px;color:#000;font-weight:normal;font-family:'Liberation Sans', sans-serif;">23,039</div>
<div class="t" style="right:1531px;top:748.62px;font-size:16.75px;line-height:16.75px;color:#000;font-weight:normal;font-family:'Liberation Sans', sans-serif;">21,929</div>
<div class="t" style="left:43.6px;top:800.62px;font-size:16.75px;line-height:16.75px;color:#000;font-weight:bold;font-family:'Liberation Sans', sans-serif;letter-spacing:-0.417px;">Other Assets:</div>
<div class="t" style="left:43.6px;top:826.62px;font-size:16.75px;line-height:16.75px;color:#000;font-weight:normal;font-family:'Liberation Sans', sans-serif;letter-spacing:0.342px;">Goodwill</div>
<div class="t" style="right:1939px;top:826.62px;font-size:16.75px;line-height:16.75px;color:#000;font-weight:normal;font-family:'Liberation Sans', sans-serif;">9,794</div>
<div class="t" style="right:1803px;top:826.62px;font-size:16.75px;line-height:16.75px;color:#000;font-weight:normal;font-family:'Liberation Sans', sans-serif;">9,794</div>
<div class="t" style="right:1667px;top:826.62px;font-size:16.75px;line-height:16.75px;color:#000;font-weight:normal;font-family:'Liberation Sans', sans-serif;">9,794</div>
<div class="t" style="right:1531px;top:826.62px;font-size:16.75px;line-height:16.75px;color:#000;font-weight:normal;font-family:'Liberation Sans', sans-serif;">9,794</div>
<div class="t" style="left:43.6px;top:852.62px;font-size:16.75px;line-height:16.75px;color:#000;font-weight:normal;font-family:'Liberation Sans', sans-serif;letter-spacing:0.044px;">Identifiable intangibles, net of accumulated amortization of $845 and $828 at December 31, 2017 and</div>
<div class="t" style="left:43.6px;top:876.62px;font-size:16.75px;line-height:16.75px;color:#000;font-weight:normal;font-family:'Liberation Sans', sans-serif;letter-spacing:-0.023px;">2016, respectively</div>
<div class="t" style="right:1939px;top:852.62px;font-size:16.75px;line-height:16.75px;color:#000;font-weight:normal;font-family:'Liberation Sans', sans-serif;">4,847</div>
<div class="t" style="right:1803px;top:852.62px;font-size:16.75px;line-height:16.75px;color:#000;font-weight:normal;font-family:'Liberation Sans', sans-serif;">4,844</div>
<div class="t" style="right:1667px;top:852.62px;font-size:16.75px;line-height:16.75px;color:#000;font-weight:normal;font-family:'Liberation Sans', sans-serif;">4,861</div>
<div class="t" style="right:1531px;top:852.62px;font-size:16.75px;line-height:16.75px;color:#000;font-weight:normal;font-family:'Liberation Sans', sans-serif;">4,603</div>
<div class="t" style="left:43.6px;top:904.62px;font-size:16.75px;line-height:16.75px;color:#000;font-weight:normal;font-family:'Liberation Sans', sans-serif;letter-spacing:-0.200px;">Deferred income taxes, net</div>
<div class="t" style="right:1939px;top:904.62px;font-size:16.75px;line-height:16.75px;color:#000;font-weight:normal;font-family:'Liberation Sans', sans-serif;">935</div>
<div class="t" style="right:1803px;top:904.62px;font-size:16.75px;line-height:16.75px;color:#000;font-weight:normal;font-family:'Liberation Sans', sans-serif;">3,064</div>
<div class="t" style="right:1667px;top:904.62px;font-size:16.75px;line-height:16.75px;color:#000;font-weight:normal;font-family:'Liberation Sans', sans-serif;">4,956</div>
<div class="t" style="right:1531px;top:904.62px;font-size:16.75px;line-height:16.75px;color:#000;font-weight:normal;font-family:'Liberation Sans', sans-serif;">7,595</div>
<div class="t" style="left:43.6px;top:930.62px;font-size:16.75px;line-height:16.75px;color:#000;font-weight:normal;font-family:'Liberation Sans', sans-serif;letter-spacing:-0.009px;">Other noncurrent assets</div>
<div class="t" style="right:1939px;top:930.62px;font-size:16.75px;line-height:16.75px;color:#000;font-weight:normal;font-family:'Liberation Sans', sans-serif;">3,309</div>
<div class="t" style="right:1803px;top:930.62px;font-size:16.75px;line-height:16.75px;color:#000;font-weight:normal;font-family:'Liberation Sans', sans-serif;">1,733</div>
<div class="t" style="right:1667px;top:930.62px;font-size:16.75px;line-height:16.75px;color:#000;font-weight:normal;font-family:'Liberation Sans', sans-serif;">1,428</div>
<div class="t" style="right:1531px;top:930.62px;font-size:16.75px;line-height:16.75px;color:#000;font-weight:normal;font-family:'Liberation Sans', sans-serif;">926</div>
<div class="t" style="left:43.6px;top:956.62px;font-size:16.75px;line-height:16.75px;color:#000;font-weight:normal;font-family:'Liberation Sans', sans-serif;letter-spacing:-0.176px;">Total other assets</div>
<div class="t" style="right:1939px;top:956.62px;font-size:16.75px;line-height:16.75px;color:#000;font-weight:normal;font-family:'Liberation Sans', sans-serif;">18,885</div>
<div class="t" style="right:1803px;top:956.62px;font-size:16.75px;line-height:16.75px;color:#000;font-weight:normal;font-family:'Liberation Sans', sans-serif;">19,435</div>
<div class="t" style="right:1667px;top:956.62px;font-size:16.75px;line-height:16.75px;color:#000;font-weight:normal;font-family:'Liberation Sans', sans-serif;">21,039</div>
<div class="t" style="right:1531px;top:956.62px;font-size:16.75px;line-height:16.75px;color:#000;font-weight:normal;font-family:'Liberation Sans', sans-serif;">22,918</div>
<div class="t" style="left:43.6px;top:982.62px;font-size:16.75px;line-height:16.75px;color:#000;font-weight:normal;font-family:'Liberation Sans', sans-serif;letter-spacing:-0.391px;">Total assets</div>
<div class="t" style="right:1939px;top:982.62px;font-size:16.75px;line-height:16.75px;color:#000;font-weight:normal;font-family:'Liberation Sans', sans-serif;">53,292</div>
<div class="t" style="right:1803px;top:982.62px;font-size:16.75px;line-height:16.75px;color:#000;font-weight:normal;font-family:'Liberation Sans', sans-serif;">51,261</div>
<div class="t" style="right:1667px;top:982.62px;font-size:16.75px;line-height:16.75px;color:#000;font-weight:normal;font-family:'Liberation Sans', sans-serif;">53,134</div>
<div class="t" style="right:1531px;top:982.62px;font-size:16.75px;line-height:16.75px;color:#000;font-weight:normal;font-family:'Liberation Sans', sans-serif;">54,005</div>
<div class="t" style="left:43.6px;top:1008.62px;font-size:16.75px;line-height:16.75px;color:#000;font-weight:bold;font-family:'Liberation Sans', sans-serif;letter-spacing:-0.526px;">Current Liabilities:</div>
<div class="t" style="left:43.6px;top:1034.62px;font-size:16.75px;line-height:16.75px;color:#000;font-weight:normal;font-family:'Liberation Sans', sans-serif;letter-spacing:-0.068px;">Current maturities of long-term debt and capital leases</div>
<div class="t" style="right:1939px;top:1034.62px;font-size:16.75px;line-height:16.75px;color:#000;font-weight:normal;font-family:'Liberation Sans', sans-serif;">2,242</div>
<div class="t" style="right:1803px;top:1034.62px;font-size:16.75px;line-height:16.75px;color:#000;font-weight:normal;font-family:'Liberation Sans', sans-serif;">1,131</div>
<div class="t" style="right:1667px;top:1034.62px;font-size:16.75px;line-height:16.75px;color:#000;font-weight:normal;font-family:'Liberation Sans', sans-serif;">1,563</div>
<div class="t" style="right:1531px;top:1034.62px;font-size:16.75px;line-height:16.75px;color:#000;font-weight:normal;font-family:'Liberation Sans', sans-serif;">1,184</div>
<div class="t" style="left:43.6px;top:1060.62px;font-size:16.75px;line-height:16.75px;color:#000;font-weight:normal;font-family:'Liberation Sans', sans-serif;letter-spacing:0.130px;">Air traffic liability</div>
<div class="t" style="right:1939px;top:1060.62px;font-size:16.75px;line-height:16.75px;color:#000;font-weight:normal;font-family:'Liberation Sans', sans-serif;">4,888</div>
<div class="t" style="right:1803px;top:1060.62px;font-size:16.75px;line-height:16.75px;color:#000;font-weight:normal;font-family:'Liberation Sans', sans-serif;">4,626</div>
<div class="t" style="right:1667px;top:1060.62px;font-size:16.75px;line-height:16.75px;color:#000;font-weight:normal;font-family:'Liberation Sans', sans-serif;">4,503</div>
<div class="t" style="right:1531px;top:1060.62px;font-size:16.75px;line-height:16.75px;color:#000;font-weight:normal;font-family:'Liberation Sans', sans-serif;">4,296</div>
<div class="t" style="left:43.6px;top:1086.62px;font-size:16.75px;line-height:16.75px;color:#000;font-weight:normal;font-family:'Liberation Sans', sans-serif;letter-spacing:-0.126px;">Accounts payable</div>
<div class="t" style="right:1939px;top:1086.62px;font-size:16.75px;line-height:16.75px;color:#000;font-weight:normal;font-family:'Liberation Sans', sans-serif;">3,674</div>
<div class="t" style="right:1803px;top:1086.62px;font-size:16.75px;line-height:16.75px;color:#000;font-weight:normal;font-family:'Liberation Sans', sans-serif;">2,572</div>
<div class="t" style="right:1667px;top:1086.62px;font-size:16.75px;line-height:16.75px;color:#000;font-weight:normal;font-family:'Liberation Sans', sans-serif;">2,743</div>
<div class="t" style="right:1531px;top:1086.62px;font-size:16.75px;line-height:16.75px;color:#000;font-weight:normal;font-family:'Liberation Sans', sans-serif;">2,622</div>
<div class="t" style="left:43.6px;top:1112.62px;font-size:16.75px;line-height:16.75px;color:#000;font-weight:normal;font-family:'Liberation Sans', sans-serif;letter-spacing:-0.260px;">Accrued salaries and related benefits</div>
<div class="t" style="right:1939px;top:1112.62px;font-size:16.75px;line-height:16.75px;color:#000;font-weight:normal;font-family:'Liberation Sans', sans-serif;">3,022</div>
<div class="t" style="right:1803px;top:1112.62px;font-size:16.75px;line-height:16.75px;color:#000;font-weight:normal;font-family:'Liberation Sans', sans-serif;">2,924</div>
<div class="t" style="right:1667px;top:1112.62px;font-size:16.75px;line-height:16.75px;color:#000;font-weight:normal;font-family:'Liberation Sans', sans-serif;">3,195</div>
<div class="t" style="right:1531px;top:1112.62px;font-size:16.75px;line-height:16.75px;color:#000;font-weight:normal;font-family:'Liberation Sans', sans-serif;">2,266</div>
<div class="t" style="left:43.6px;top:1138.62px;font-size:16.75px;line-height:16.75px;color:#000;font-weight:normal;font-family:'Liberation Sans', sans-serif;letter-spacing:-0.130px;">Frequent flyer deferred revenue</div>
<div class="t" style="right:1939px;top:1138.62px;font-size:16.75px;line-height:16.75px;color:#000;font-weight:normal;font-family:'Liberation Sans', sans-serif;">1,822</div>
<div class="t" style="right:1803px;top:1138.62px;font-size:16.75px;line-height:16.75px;color:#000;font-weight:normal;font-family:'Liberation Sans', sans-serif;">1,648</div>
<div class="t" style="right:1667px;top:1138.62px;font-size:16.75px;line-height:16.75px;color:#000;font-weight:normal;font-family:'Liberation Sans', sans-serif;">2,581</div>
<div class="t" style="right:1531px;top:1138.62px;font-size:16.75px;line-height:16.75px;color:#000;font-weight:normal;font-family:'Liberation Sans', sans-serif;">2,772</div>
<div class="t" style="left:43.6px;top:1164.62px;font-size:16.75px;line-height:16.75px;color:#000;font-weight:normal;font-family:'Liberation Sans', sans-serif;letter-spacing:-0.126px;">Fuel card obligation</div>
<div class="t" style="right:1939px;top:1164.62px;font-size:16.75px;line-height:16.75px;color:#000;font-weight:normal;font-family:'Liberation Sans', sans-serif;">1,067</div>
<div class="t" style="right:1803px;top:1164.62px;font-size:16.75px;line-height:16.75px;color:#000;font-weight:normal;font-family:'Liberation Sans', sans-serif;">431</div>
<div class="t" style="right:1667px;top:1164.62px;font-size:16.75px;line-height:16.75px;color:#000;font-weight:normal;font-family:'Liberation Sans', sans-serif;">1,635</div>
<div class="t" style="right:1531px;top:1164.62px;font-size:16.75px;line-height:16.75px;color:#000;font-weight:normal;font-family:'Liberation Sans', sans-serif;">1,580</div>
<div class="t" style="left:43.6px;top:1190.62px;font-size:16.75px;line-height:16.75px;color:#000;font-weight:normal;font-family:'Liberation Sans', sans-serif;letter-spacing:-0.125px;">Other accrued liabilities</div>
<div class="t" style="right:1939px;top:1190.62px;font-size:16.75px;line-height:16.75px;color:#000;font-weight:normal;font-family:'Liberation Sans', sans-serif;">1,858</div>
<div class="t" style="right:1803px;top:1190.62px;font-size:16.75px;line-height:16.75px;color:#000;font-weight:normal;font-family:'Liberation Sans', sans-serif;">1,907</div>
<div class="t" style="right:1667px;top:1190.62px;font-size:16.75px;line-height:16.75px;color:#000;font-weight:normal;font-family:'Liberation Sans', sans-serif;">1,306</div>
<div class="t" style="right:1531px;top:1190.62px;font-size:16.75px;line-height:16.75px;color:#000;font-weight:normal;font-family:'Liberation Sans', sans-serif;">2,127</div>
<div class="t" style="left:43.6px;top:1216.62px;font-size:16.75px;line-height:16.75px;color:#000;font-weight:normal;font-family:'Liberation Sans', sans-serif;letter-spacing:0.039px;">Total current liabilities</div>
<div class="t" style="right:1939px;top:1216.62px;font-size:16.75px;line-height:16.75px;color:#000;font-weight:normal;font-family:'Liberation Sans', sans-serif;">18,573</div>
<div class="t" style="right:1803px;top:1216.62px;font-size:16.75px;line-height:16.75px;color:#000;font-weight:normal;font-family:'Liberation Sans', sans-serif;">15,239</div>
<div class="t" style="right:1667px;top:1216.62px;font-size:16.75px;line-height:16.75px;color:#000;font-weight:normal;font-family:'Liberation Sans', sans-serif;">17,526</div>
<div class="t" style="right:1531px;top:1216.62px;font-size:16.75px;line-height:16.75px;color:#000;font-weight:normal;font-family:'Liberation Sans', sans-serif;">16,847</div>
<div class="t" style="left:43.6px;top:1242.62px;font-size:16.75px;line-height:16.75px;color:#000;font-weight:bold;font-family:'Liberation Sans', sans-serif;letter-spacing:-0.427px;">Noncurrent Liabilities:</div>
<div class="t" style="left:43.6px;top:1268.62px;font-size:16.75px;line-height:16.75px;color:#000;font-weight:normal;font-family:'Liberation Sans', sans-serif;letter-spacing:-0.191px;">Long-term debt and capital leases</div>
<div class="t" style="right:1939px;top:1268.62px;font-size:16.75px;line-height:16.75px;color:#000;font-weight:normal;font-family:'Liberation Sans', sans-serif;">6,592</div>
<div class="t" style="right:1803px;top:1268.62px;font-size:16.75px;line-height:16.75px;color:#000;font-weight:normal;font-family:'Liberation Sans', sans-serif;">6,201</div>
<div class="t" style="right:1667px;top:1268.62px;font-size:16.75px;line-height:16.75px;color:#000;font-weight:normal;font-family:'Liberation Sans', sans-serif;">6,766</div>
<div class="t" style="right:1531px;top:1268.62px;font-size:16.75px;line-height:16.75px;color:#000;font-weight:normal;font-family:'Liberation Sans', sans-serif;">8,477</div>
<div class="t" style="left:43.6px;top:1294.62px;font-size:16.75px;line-height:16.75px;color:#000;font-weight:normal;font-family:'Liberation Sans', sans-serif;letter-spacing:-0.033px;">Pension, postretirement and related benefits</div>
<div class="t" style="right:1939px;top:1294.62px;font-size:16.75px;line-height:16.75px;color:#000;font-weight:normal;font-family:'Liberation Sans', sans-serif;">9,810</div>
<div class="t" style="right:1803px;top:1294.62px;font-size:16.75px;line-height:16.75px;color:#000;font-weight:normal;font-family:'Liberation Sans', sans-serif;">13,378</div>
<div class="t" style="right:1667px;top:1294.62px;font-size:16.75px;line-height:16.75px;color:#000;font-weight:normal;font-family:'Liberation Sans', sans-serif;">13,855</div>
<div class="t" style="right:1531px;top:1294.62px;font-size:16.75px;line-height:16.75px;color:#000;font-weight:normal;font-family:'Liberation Sans', sans-serif;">15,138</div>
<div class="t" style="left:43.6px;top:1320.62px;font-size:16.75px;line-height:16.75px;color:#000;font-weight:normal;font-family:'Liberation Sans', sans-serif;letter-spacing:-0.130px;">Frequent flyer deferred revenue</div>
<div class="t" style="right:1939px;top:1320.62px;font-size:16.75px;line-height:16.75px;color:#000;font-weight:normal;font-family:'Liberation Sans', sans-serif;">2,296</div>
<div class="t" style="right:1803px;top:1320.62px;font-size:16.75px;line-height:16.75px;color:#000;font-weight:normal;font-family:'Liberation Sans', sans-serif;">2,278</div>
<div class="t" style="right:1667px;top:1320.62px;font-size:16.75px;line-height:16.75px;color:#000;font-weight:normal;font-family:'Liberation Sans', sans-serif;">2,246</div>
<div class="t" style="right:1531px;top:1320.62px;font-size:16.75px;line-height:16.75px;color:#000;font-weight:normal;font-family:'Liberation Sans', sans-serif;">2,602</div>
<div class="t" style="left:43.6px;top:1346.62px;font-size:16.75px;line-height:16.75px;color:#000;font-weight:normal;font-family:'Liberation Sans', sans-serif;letter-spacing:0.111px;">Other noncurrent liabilities</div>
<div class="t" style="right:1939px;top:1346.62px;font-size:16.75px;line-height:16.75px;color:#000;font-weight:normal;font-family:'Liberation Sans', sans-serif;">2,111</div>
<div class="t" style="right:1803px;top:1346.62px;font-size:16.75px;line-height:16.75px;color:#000;font-weight:normal;font-family:'Liberation Sans', sans-serif;">1,878</div>
<div class="t" style="right:1667px;top:1346.62px;font-size:16.75px;line-height:16.75px;color:#000;font-weight:normal;font-family:'Liberation Sans', sans-serif;">1,891</div>
<div class="t" style="right:1531px;top:1346.62px;font-size:16.75px;line-height:16.75px;color:#000;font-weight:normal;font-family:'Liberation Sans', sans-serif;">2,128</div>
<div class="t" style="left:43.6px;top:1372.62px;font-size:16.75px;line-height:16.75px;color:#000;font-weight:normal;font-family:'Liberation Sans', sans-serif;letter-spacing:0.086px;">Total noncurrent liabilities</div>
<div class="t" style="right:1939px;top:1372.62px;font-size:16.75px;line-height:16.75px;color:#000;font-weight:normal;font-family:'Liberation Sans', sans-serif;">20,809</div>
<div class="t" style="right:1803px;top:1372.62px;font-size:16.75px;line-height:16.75px;color:#000;font-weight:normal;font-family:'Liberation Sans', sans-serif;">23,735</div>
<div class="t" style="right:1667px;top:1372.62px;font-size:16.75px;line-height:16.75px;color:#000;font-weight:normal;font-family:'Liberation Sans', sans-serif;">24,758</div>
<div class="t" style="right:1531px;top:1372.62px;font-size:16.75px;line-height:16.75px;color:#000;font-weight:normal;font-family:'Liberation Sans', sans-serif;">$ 28,345</div>
<div class="t" style="left:43.6px;top:1398.62px;font-size:16.75px;line-height:16.75px;color:#000;font-weight:normal;font-family:'Liberation Sans', sans-serif;letter-spacing:-0.122px;">Commitments and Contingencies</div>
<div class="t" style="left:43.6px;top:1424.62px;font-size:16.75px;line-height:16.75px;color:#000;font-weight:bold;font-family:'Liberation Sans', sans-serif;letter-spacing:-0.635px;">Stockholders&#x27; Equity:</div>
<div class="t" style="left:43.6px;top:1450.62px;font-size:16.75px;line-height:16.75px;color:#000;font-weight:normal;font-family:'Liberation Sans', sans-serif;letter-spacing:0.090px;">Common stock at $0.0001 par value; 1,500,000,000 shares authorized, 714,674,160 and 744,886,938</div>
<div class="t" style="left:43.6px;top:1474.62px;font-size:16.75px;line-height:16.75px;color:#000;font-weight:normal;font-family:'Liberation Sans', sans-serif;letter-spacing:-0.144px;">shares issued at December 31, 2017 and 2016, respectively</div>
<div class="t" style="right:1939px;top:1450.62px;font-size:16.75px;line-height:16.75px;color:#000;font-weight:normal;font-family:'Liberation Sans', sans-serif;">0</div>
<div class="t" style="right:1803px;top:1450.62px;font-size:16.75px;line-height:16.75px;color:#000;font-weight:normal;font-family:'Liberation Sans', sans-serif;">0</div>
<div class="t" style="right:1667px;top:1450.62px;font-size:16.75px;line-height:16.75px;color:#000;font-weight:normal;font-family:'Liberation Sans', sans-serif;">0</div>
<div class="t" style="right:1531px;top:1450.62px;font-size:16.75px;line-height:16.75px;color:#000;font-weight:normal;font-family:'Liberation Sans', sans-serif;">$ 0</div>
<div class="t" style="left:43.6px;top:1502.62px;font-size:16.75px;line-height:16.75px;color:#000;font-weight:normal;font-family:'Liberation Sans', sans-serif;letter-spacing:0.108px;">Additional paid-in capital</div>
<div class="t" style="right:1939px;top:1502.62px;font-size:16.75px;line-height:16.75px;color:#000;font-weight:normal;font-family:'Liberation Sans', sans-serif;">12,053</div>
<div class="t" style="right:1803px;top:1502.62px;font-size:16.75px;line-height:16.75px;color:#000;font-weight:normal;font-family:'Liberation Sans', sans-serif;">12,294</div>
<div class="t" style="right:1667px;top:1502.62px;font-size:16.75px;line-height:16.75px;color:#000;font-weight:normal;font-family:'Liberation Sans', sans-serif;">12,936</div>
<div class="t" style="right:1531px;top:1502.62px;font-size:16.75px;line-height:16.75px;color:#000;font-weight:normal;font-family:'Liberation Sans', sans-serif;">12,981</div>
<div class="t" style="left:43.6px;top:1528.62px;font-size:16.75px;line-height:16.75px;color:#000;font-weight:normal;font-family:'Liberation Sans', sans-serif;letter-spacing:-0.375px;">Retained earnings</div>
<div class="t" style="right:1939px;top:1528.62px;font-size:16.75px;line-height:16.75px;color:#000;font-weight:normal;font-family:'Liberation Sans', sans-serif;">9,636</div>
<div class="t" style="right:1803px;top:1528.62px;font-size:16.75px;line-height:16.75px;color:#000;font-weight:normal;font-family:'Liberation Sans', sans-serif;">7,903</div>
<div class="t" style="right:1667px;top:1528.62px;font-size:16.75px;line-height:16.75px;color:#000;font-weight:normal;font-family:'Liberation Sans', sans-serif;">5,562</div>
<div class="t" style="right:1531px;top:1528.62px;font-size:16.75px;line-height:16.75px;color:#000;font-weight:normal;font-family:'Liberation Sans', sans-serif;">3,456</div>
<div class="t" style="left:43.6px;top:1554.62px;font-size:16.75px;line-height:16.75px;color:#000;font-weight:normal;font-family:'Liberation Sans', sans-serif;letter-spacing:-0.114px;">Accumulated other comprehensive loss</div>
<div class="t" style="right:1933px;top:1554.62px;font-size:16.75px;line-height:16.75px;color:#000;font-weight:normal;font-family:'Liberation Sans', sans-serif;">(7,621)</div>
<div class="t" style="right:1797px;top:1554.62px;font-size:16.75px;line-height:16.75px;color:#000;font-weight:normal;font-family:'Liberation Sans', sans-serif;">(7,636)</div>
<div class="t" style="right:1661px;top:1554.62px;font-size:16.75px;line-height:16.75px;color:#000;font-weight:normal;font-family:'Liberation Sans', sans-serif;">(7,275)</div>
<div class="t" style="right:1525px;top:1554.62px;font-size:16.75px;line-height:16.75px;color:#000;font-weight:normal;font-family:'Liberation Sans', sans-serif;">(7,311)</div>
<div class="t" style="left:43.6px;top:1580.62px;font-size:16.75px;line-height:16.75px;color:#000;font-weight:normal;font-family:'Liberation Sans', sans-serif;letter-spacing:-0.045px;">Treasury stock, at cost, 7,476,181 and 14,149,229 shares at December 31, 2017 and 2016, respectively</div>
<div class="t" style="right:1933px;top:1580.62px;font-size:16.75px;line-height:16.75px;color:#000;font-weight:normal;font-family:'Liberation Sans', sans-serif;">(158)</div>
<div class="t" style="right:1797px;top:1580.62px;font-size:16.75px;line-height:16.75px;color:#000;font-weight:normal;font-family:'Liberation Sans', sans-serif;">(274)</div>
<div class="t" style="right:1661px;top:1580.62px;font-size:16.75px;line-height:16.75px;color:#000;font-weight:normal;font-family:'Liberation Sans', sans-serif;">(373)</div>
<div class="t" style="right:1525px;top:1580.62px;font-size:16.75px;line-height:16.75px;color:#000;font-weight:normal;font-family:'Liberation Sans', sans-serif;">(313)</div>
<div class="t" style="left:43.6px;top:1632.62px;font-size:16.75px;line-height:16.75px;color:#000;font-weight:normal;font-family:'Liberation Sans', sans-serif;letter-spacing:0.092px;">Total stockholders&#x27; equity</div>
<div class="t" style="right:1939px;top:1632.62px;font-size:16.75px;line-height:16.75px;color:#000;font-weight:normal;font-family:'Liberation Sans', sans-serif;">13,910</div>
<div class="t" style="right:1803px;top:1632.62px;font-size:16.75px;line-height:16.75px;color:#000;font-weight:normal;font-family:'Liberation Sans', sans-serif;">12,287</div>
<div class="t" style="right:1667px;top:1632.62px;font-size:16.75px;line-height:16.75px;color:#000;font-weight:normal;font-family:'Liberation Sans', sans-serif;">10,850</div>
<div class="t" style="right:1531px;top:1632.62px;font-size:16.75px;line-height:16.75px;color:#000;font-weight:normal;font-family:'Liberation Sans', sans-serif;">8,813</div>
<div class="t" style="left:43.6px;top:1658.62px;font-size:16.75px;line-height:16.75px;color:#000;font-weight:normal;font-family:'Liberation Sans', sans-serif;letter-spacing:0.054px;">Total liabilities and stockholders&#x27; equity</div>
<div class="t" style="right:1939px;top:1658.62px;font-size:16.75px;line-height:16.75px;color:#000;font-weight:normal;font-family:'Liberation Sans', sans-serif;">$ 53,292</div>
<div class="t" style="right:1803px;top:1658.62px;font-size:16.75px;line-height:16.75px;color:#000;font-weight:normal;font-family:'Liberation Sans', sans-serif;">$ 51,261</div>
<div class="t" style="right:1667px;top:1658.62px;font-size:16.75px;line-height:16.75px;color:#000;font-weight:normal;font-family:'Liberation Sans', sans-serif;">$ 53,134</div>
<div class="t" style="right:1531px;top:1658.62px;font-size:16.75px;line-height:16.75px;color:#000;font-weight:normal;font-family:'Liberation Sans', sans-serif;">$ 54,005</div>
<div class="r" style="left:36px;top:1286px;width:784px;height:32px;box-sizing:border-box;border:4px solid #1d6f42;"></div>
<div class="r" style="left:810px;top:1308px;width:13px;height:13px;background:#fff;"></div>
<div class="r" style="left:812px;top:1310px;width:10px;height:10px;background:#1d6f42;"></div>
<div class="r" style="left:0px;top:1702px;width:2880px;height:53px;background:#f1f1f1;"></div>
<div class="r" style="left:0px;top:1702px;width:2880px;height:2px;background:#c8c8c8;"></div>
<div class="r" style="left:0px;top:1754px;width:2880px;height:2px;background:#a9a9a9;"></div>
<svg class="r" style="left:30px;top:1719px" width="16" height="21" viewBox="0 0 16 21"><polygon points="14,0 14,21 0,10.5" fill="#b2b2b2"/></svg>
<svg class="r" style="left:76px;top:1719px" width="16" height="21" viewBox="0 0 16 21"><polygon points="0,0 0,21 14,10.5" fill="#b2b2b2"/></svg>
<div class="r" style="left:120px;top:1704px;width:2px;height:41px;background:#cfcfcf;"></div>
<div class="r" style="left:279px;top:1702px;width:424px;height:45px;background:#fff;border-radius:0 0 5px 5px;box-shadow:0 1px 2px rgba(0,0,0,0.25);"></div>
<div class="t" style="left:166px;top:1715.00px;font-size:25px;line-height:25px;color:#5a5a5a;font-weight:normal;font-family:'Liberation Sans', sans-serif;-webkit-text-stroke:0.25px #5a5a5a;">Ratios</div>
<div class="t" style="left:323px;top:1716.00px;font-size:24px;line-height:24px;color:#1e7d4c;font-weight:bold;font-family:'Liberation Sans', sans-serif;">Consolidated Balance Sheets</div>
<div class="t" style="left:747px;top:1715.00px;font-size:25px;line-height:25px;color:#5a5a5a;font-weight:normal;font-family:'Liberation Sans', sans-serif;letter-spacing:0.12px;-webkit-text-stroke:0.25px #5a5a5a;">Consolidated Statements of Oper</div>
<div class="r" style="left:1162px;top:1704px;width:2px;height:41px;background:#cfcfcf;"></div>
<div class="t" style="left:1208px;top:1715.00px;font-size:25px;line-height:25px;color:#5a5a5a;font-weight:normal;font-family:'Liberation Sans', sans-serif;letter-spacing:0.12px;-webkit-text-stroke:0.25px #5a5a5a;">Consolidated Statements of Cash</div>
<div class="r" style="left:1626px;top:1704px;width:2px;height:41px;background:#cfcfcf;"></div>
<div class="t" style="left:1671px;top:1715.00px;font-size:25px;line-height:25px;color:#5a5a5a;font-weight:normal;font-family:'Liberation Sans', sans-serif;letter-spacing:0.12px;-webkit-text-stroke:0.25px #5a5a5a;">Consolidated Statements of Stoc</div>
<div class="r" style="left:2083px;top:1704px;width:2px;height:41px;background:#cfcfcf;"></div>
<div class="r" style="left:2159px;top:1704px;width:2px;height:41px;background:#cfcfcf;"></div>
<svg class="r" style="left:2112px;top:1717px" width="22" height="22" viewBox="0 0 22 22"><path d="M11 1V21M1 11H21" stroke="#444" stroke-width="3"/></svg>
<div class="r" style="left:0px;top:1756px;width:2880px;height:44px;background:linear-gradient(#e3e3e3,#dadada);"></div>
<div class="r" style="left:2244px;top:1756px;width:74px;height:44px;background:#a8a8a8;"></div>
<div class="r" style="left:209px;top:144px;width:2px;height:124px;background:#cfcfcf;"></div>
<div class="r" style="left:749px;top:144px;width:2px;height:124px;background:#cfcfcf;"></div>
<div class="r" style="left:1073px;top:144px;width:2px;height:124px;background:#cfcfcf;"></div>
<div class="r" style="left:1351px;top:144px;width:2px;height:124px;background:#cfcfcf;"></div>
<div class="r" style="left:1703px;top:144px;width:2px;height:124px;background:#cfcfcf;"></div>
<div class="r" style="left:2069px;top:144px;width:2px;height:124px;background:#cfcfcf;"></div>
<div class="r" style="left:2407px;top:144px;width:2px;height:124px;background:#cfcfcf;"></div>
<div class="r" style="left:2717px;top:144px;width:2px;height:124px;background:#cfcfcf;"></div>
<div class="r" style="left:422px;top:224px;width:2px;height:36px;background:#d3d3d3;"></div>
<div class="r" style="left:529px;top:224px;width:2px;height:36px;background:#d3d3d3;"></div>
<div class="r" style="left:939px;top:160px;width:2px;height:37px;background:#d3d3d3;"></div>
<div class="r" style="left:939px;top:224px;width:2px;height:36px;background:#d3d3d3;"></div>
<div class="r" style="left:1565px;top:224px;width:2px;height:36px;background:#d3d3d3;"></div>
<div class="r" style="left:230px;top:154px;width:282px;height:48px;background:#fff;border:1px solid #c3c3c3;border-radius:5px;box-sizing:border-box;"></div>
<div class="r" style="left:516px;top:154px;width:108px;height:48px;background:#fff;border:1px solid #c3c3c3;border-radius:5px;box-sizing:border-box;"></div>
<div class="r" style="left:1372px;top:154px;width:310px;height:48px;background:#fff;border:1px solid #c3c3c3;border-radius:5px;box-sizing:border-box;"></div>
<div class="r" style="left:770px;top:154px;width:48px;height:48px;background:linear-gradient(#c9c9c9,#bdbdbd);border-radius:5px;"></div>
<div class="r" style="left:1090px;top:154px;width:182px;height:48px;background:linear-gradient(#ececec,#e2e2e2);border-radius:5px;"></div>
<div class="r" style="left:1090px;top:154px;width:158px;height:48px;background:linear-gradient(#c9c9c9,#bdbdbd);border-radius:5px 0 0 5px;"></div>
<div class="r" style="left:2516px;top:84px;width:132px;height:48px;background:#fff;border:1px solid #cfcfcf;border-radius:6px;box-sizing:border-box;"></div>
<div class="r" style="left:2668px;top:84px;width:192px;height:48px;background:#fff;border:1px solid #cfcfcf;border-radius:6px;box-sizing:border-box;"></div>
<div class="t" style="left:2567px;top:97.00px;font-size:24px;line-height:24px;color:#1e7145;font-weight:bold;font-family:'Liberation Sans', sans-serif;letter-spacing:0.4px;">Share</div>
<div class="t" style="left:2720px;top:97.00px;font-size:24px;line-height:24px;color:#1e7145;font-weight:bold;font-family:'Liberation Sans', sans-serif;letter-spacing:0.6px;">Comments</div>
<div class="t" style="left:40px;top:224.00px;font-size:22px;line-height:22px;color:#141414;font-weight:normal;font-family:'Liberation Sans', sans-serif;">Paste</div>
<div class="t" style="left:242px;top:165.75px;font-size:24.5px;line-height:24.5px;color:#141414;font-weight:normal;font-family:'Liberation Sans', sans-serif;letter-spacing:0.5px;">Calibri</div>
<div class="t" style="left:1143px;top:168.00px;font-size:22px;line-height:22px;color:#141414;font-weight:normal;font-family:'Liberation Sans', sans-serif;">Wrap Text</div>
<div class="t" style="left:1142px;top:232.00px;font-size:22px;line-height:22px;color:#141414;font-weight:normal;font-family:'Liberation Sans', sans-serif;letter-spacing:0.25px;">Merge &amp; Center</div>
<div class="t" style="left:1384px;top:166.00px;font-size:24px;line-height:24px;color:#141414;font-weight:normal;font-family:'Liberation Sans', sans-serif;letter-spacing:0.3px;">General</div>
<div class="t" style="left:1185px;width:1200px;text-align:center;top:224.00px;font-size:22px;line-height:22px;color:#141414;font-weight:normal;font-family:'Liberation Sans', sans-serif;">Conditional</div>
<div class="t" style="left:1185px;width:1200px;text-align:center;top:248.00px;font-size:22px;line-height:22px;color:#141414;font-weight:normal;font-family:'Liberation Sans', sans-serif;">Formatting</div>
<div class="t" style="left:1299px;width:1200px;text-align:center;top:224.00px;font-size:22px;line-height:22px;color:#141414;font-weight:normal;font-family:'Liberation Sans', sans-serif;">Format</div>
<div class="t" style="left:1299px;width:1200px;text-align:center;top:248.00px;font-size:22px;line-height:22px;color:#141414;font-weight:normal;font-family:'Liberation Sans', sans-serif;">as Table</div>
<div class="t" style="left:1398.5px;width:1200px;text-align:center;top:224.00px;font-size:22px;line-height:22px;color:#141414;font-weight:normal;font-family:'Liberation Sans', sans-serif;">Cell</div>
<div class="t" style="left:1398.5px;width:1200px;text-align:center;top:248.00px;font-size:22px;line-height:22px;color:#141414;font-weight:normal;font-family:'Liberation Sans', sans-serif;">Styles</div>
<div class="t" style="left:1945.8000000000002px;width:1200px;text-align:center;top:224.00px;font-size:22px;line-height:22px;color:#141414;font-weight:normal;font-family:'Liberation Sans', sans-serif;">Sort &amp;</div>
<div class="t" style="left:1945.8000000000002px;width:1200px;text-align:center;top:248.00px;font-size:22px;line-height:22px;color:#141414;font-weight:normal;font-family:'Liberation Sans', sans-serif;">Filter</div>
<div class="t" style="left:2046px;width:1200px;text-align:center;top:224.00px;font-size:22px;line-height:22px;color:#141414;font-weight:normal;font-family:'Liberation Sans', sans-serif;">Find &amp;</div>
<div class="t" style="left:2046px;width:1200px;text-align:center;top:248.00px;font-size:22px;line-height:22px;color:#141414;font-weight:normal;font-family:'Liberation Sans', sans-serif;">Select</div>
<div class="t" style="left:1536.5px;width:1200px;text-align:center;top:224.00px;font-size:22px;line-height:22px;color:#141414;font-weight:normal;font-family:'Liberation Sans', sans-serif;">Insert</div>
<div class="t" style="left:1636.5px;width:1200px;text-align:center;top:224.00px;font-size:22px;line-height:22px;color:#141414;font-weight:normal;font-family:'Liberation Sans', sans-serif;">Delete</div>
<div class="t" style="left:1737.5px;width:1200px;text-align:center;top:224.00px;font-size:22px;line-height:22px;color:#141414;font-weight:normal;font-family:'Liberation Sans', sans-serif;">Format</div>
<div class="t" style="left:2173px;width:1200px;text-align:center;top:224.00px;font-size:22px;line-height:22px;color:#141414;font-weight:normal;font-family:'Liberation Sans', sans-serif;">Ideas</div>
<div class="t" style="left:247px;top:227.00px;font-size:28px;line-height:28px;color:#333;font-weight:bold;font-family:'Liberation Sans', sans-serif;">B</div>
<div class="t" style="left:297px;top:227.00px;font-size:28px;line-height:28px;color:#333;font-weight:normal;font-family:'Liberation Serif', serif;font-style:italic;">I</div>
<div class="t" style="left:349px;top:227.50px;font-size:26px;line-height:26px;color:#333;font-weight:normal;font-family:'Liberation Sans', sans-serif;">U</div>
<div class="r" style="left:348px;top:252px;width:18px;height:2px;background:#333;"></div>
<svg class="r" style="left:0;top:0" width="2880" height="1800" viewBox="0 0 2880 1800"><defs><linearGradient id="tg" x1="0" y1="0" x2="0" y2="1"><stop offset="0" stop-color="#17402b"/><stop offset="1" stop-color="#2a5a43"/></linearGradient></defs><rect x="150" y="24" width="80" height="28" rx="14" fill="url(#tg)"/><circle cx="164" cy="38" r="12" fill="#f7f7f7"/><text x="182.5" y="45" font-family="Liberation Sans" font-weight="bold" font-size="15.5" fill="#e3efe8">OFF</text><polyline points="254,36 268,23.5 282,36" fill="none" stroke="#fff" stroke-width="3.2" stroke-linecap="round" stroke-linejoin="miter"/><path d="M256,38 L268,27.5 L280,38 L280,51 Q280,52 279,52 L272,52 L272,42 Q272,40 270,40 L266,40 Q264,40 264,42 L264,52 L257,52 Q256,52 256,51 Z" fill="#fff"/><path d="M305,24 L330,24 Q332,24 332,26 L332,50 Q332,52 330,52 L308,52 L304,48 L304,25 Q304,24 305,24 Z M308,26.5 L308,35 Q308,37 310,37 L326,37 Q328,37 328,35 L328,26.5 Z M312,50 L312,45 Q312,42 315,42 L321,42 Q324,42 324,45 L324,50 L320,50 L320,46 L316,46 L316,50 Z" fill="#fff" fill-rule="evenodd"/><path d="M352,24 L377,24 L375.5,26.2 L354,26.2 L354,35.5 Q354,38 356.5,38 L365,38 L364,41.8 L360,41.8 Q358,41.8 358,43.5 L358,50 L360,50 L360,46 L363,46 L364.5,50 L369.8,50 L370.5,47.5 Q375,47 378,44 L378,50 Q378,52 376,52 L354,52 L350,48 L350,26 Q350,24 352,24 Z" fill="#d5e5dc"/><polygon points="365.8,46 368.2,38.3 374.2,44.2" fill="#d5e5dc"/><polygon points="369.8,36.3 377.8,28.6 383.4,34.1 375.4,41.9" fill="#d5e5dc"/><path d="M379.6,27.4 Q382.6,24.6 385.6,27.4 Q388.6,30.6 385.3,33.2 Z" fill="#d5e5dc"/><path d="M414,25.5 L405,34 L414,42.5 M405.5,34 L423,34 Q432,34 432,42 Q432,50 424,50" fill="none" stroke="#fff" stroke-width="3.2" stroke-linecap="round" stroke-linejoin="round"/><polyline points="449,35.5 454.0,42.0 459,35.5" fill="none" stroke="#fff" stroke-width="1.6" stroke-linecap="round" stroke-linejoin="round"/><path d="M483,32 A13,13 0 1 0 500,29" fill="none" stroke="#fff" stroke-width="3.2" stroke-linecap="round"/><path d="M495,38 L495,25.5 L507.5,25.5" fill="none" stroke="#fff" stroke-width="3.2" stroke-linecap="round" stroke-linejoin="miter"/><rect x="537" y="33" width="14" height="2.2" fill="#fff"/><polygon points="537,39 551,39 544,47" fill="#fff"/><path d="M1266,23 L1278,23 L1288,33 L1288,52 L1266,52 Z" fill="#fafafa"/><path d="M1278,23 L1279,32 L1288,33 Z" fill="#e4e4e4"/><defs><linearGradient id="xg" x1="0" y1="0" x2="0" y2="1"><stop offset="0" stop-color="#23945c"/><stop offset="1" stop-color="#0a7a40"/></linearGradient></defs><rect x="1262" y="30.2" width="15" height="14.8" rx="1.6" fill="url(#xg)"/><path d="M1266.3,33.5 L1272.7,41.8 M1272.7,33.5 L1266.3,41.8" stroke="#fff" stroke-width="1.9"/><rect x="1278" y="34.0" width="3" height="2.2" fill="#10955a"/><rect x="1282" y="34.0" width="3" height="2.2" fill="#1fb06c"/><rect x="1278" y="37.1" width="3" height="2.2" fill="#0d7a40"/><rect x="1282" y="37.1" width="3" height="2.2" fill="#12985c"/><rect x="1278" y="40.2" width="3" height="2.2" fill="#064d25"/><rect x="1282" y="40.2" width="3" height="2.2" fill="#05381b"/><polyline points="1604,35 1611.0,41 1618,35" fill="none" stroke="#8fbfa3" stroke-width="1.6" stroke-linecap="round" stroke-linejoin="round"/><circle cx="2775" cy="34.5" r="9" fill="none" stroke="#fff" stroke-width="2.2"/><line x1="2781.5" y1="41" x2="2790" y2="49.5" stroke="#fff" stroke-width="2.2" stroke-linecap="round"/><path d="M2839,20 L2859,20 Q2860,20 2860,21 L2860,35 Q2860,36 2859,36 L2856,36 L2850,41.5 L2850,36 L2846,36 A9,9 0 0 0 2838,30 Z" fill="#fff"/><circle cx="2838" cy="38" r="6.2" fill="#fff"/><path d="M2826,56 Q2826,45 2833,44.5 Q2838,47 2843,44.5 Q2850,45 2850,56 Z" fill="#fff"/><g transform="translate(-1,-1.2)"><path d="M2535,108 L2535,120 L2552,120 L2552,116" fill="none" stroke="#1e7145" stroke-width="2"/><path d="M2539.5,114.5 Q2541,103 2549.5,102.5 L2549.5,98 L2556.5,105 L2549.5,112 L2549.5,107.5 Q2543,108 2539.5,114.5 Z" fill="none" stroke="#1e7145" stroke-width="1.9" stroke-linejoin="round"/></g><path d="M2689,97 L2707,97 Q2709,97 2709,99 L2709,111 Q2709,113 2707,113 L2699,113 L2693,119 L2693,113 L2689,113 Q2687,113 2687,111 L2687,99 Q2687,97 2689,97 Z" fill="none" stroke="#1e7145" stroke-width="2" stroke-linejoin="round"/><path d="M1093.3,111 Q1093,107 1089.8,104.2 A9.6,9.6 0 1 1 1103.8,104.2 Q1100.6,107 1100.3,111 Z" fill="#f9f9f9" stroke="#262626" stroke-width="1.7" stroke-linejoin="round"/><rect x="1093.3" y="111" width="7" height="4.5" fill="none" stroke="#262626" stroke-width="1.6"/><line x1="1094.2" y1="119" x2="1099.8" y2="119" stroke="#262626" stroke-width="1.8"/><rect x="35" y="163" width="40" height="46" fill="#f8dc98" stroke="#ee8a2f" stroke-width="2"/><rect x="40" y="168" width="30" height="36" fill="#fafafa"/><path d="M43,169.5 L43,161 L49,161 Q49,155 55,155 Q61,155 61,161 L67,161 L67,169.5 Z" fill="#fafafa" stroke="#6e6a66" stroke-width="1.6"/><rect x="58" y="176" width="32" height="40" fill="#f2f2f2"/><rect x="61" y="178.8" width="27" height="34.5" fill="#fafafa" stroke="#2e2e2e" stroke-width="1.7"/><polyline points="98.5,180 103.75,186.5 109.0,180" fill="none" stroke="#333333" stroke-width="2.5" stroke-linecap="round" stroke-linejoin="round"/><line x1="136.5" y1="150" x2="148" y2="173.5" stroke="#333" stroke-width="1.3"/><line x1="147.5" y1="150" x2="136" y2="173.5" stroke="#333" stroke-width="1.3"/><circle cx="136" cy="178" r="3.3" fill="none" stroke="#1688d4" stroke-width="1.7"/><circle cx="148" cy="178" r="3.3" fill="none" stroke="#1688d4" stroke-width="1.7"/><path d="M135,220.8 L127,220.8 L127,194.5 L137,194.5 L140.5,197.5" fill="none" stroke="#333" stroke-width="1.6"/><path d="M139,201 L149.5,201 L157,207.5 L157,225 L139,225 Z" fill="#fafafa" stroke="#333" stroke-width="1.7" stroke-linejoin="miter"/><path d="M149.5,201 L149.5,208.5 L157,208.5" fill="none" stroke="#333" stroke-width="1.5"/><line x1="144" y1="214.5" x2="152" y2="214.5" stroke="#6e6a66" stroke-width="1.4"/><line x1="144" y1="218.8" x2="152" y2="218.8" stroke="#6e6a66" stroke-width="1.4"/><polyline points="171,208 176.25,214 181.5,208" fill="none" stroke="#333333" stroke-width="2.5" stroke-linecap="round" stroke-linejoin="round"/><path d="M127,252.5 Q135,251 140.5,246.5 L151.5,257.5 Q146,263 141,268.5 Z" fill="#fafafa" stroke="#ee8a2f" stroke-width="1.6" stroke-linejoin="round"/><path d="M127.5,252.5 L148,260 L141,268 Z" fill="#f8dc98" stroke="#ee8a2f" stroke-width="1.5" stroke-linejoin="round"/><path d="M140,247 L142.5,243.5 L145.5,246 L154.5,237 Q156,235.5 157.5,237 Q159,238.5 157.5,240 L148.5,249 L151,252 L148,256 Z" fill="#f7f7f7" stroke="#333" stroke-width="1.6" stroke-linejoin="round"/><path d="M528.8,172.5 L534.5,169 L534.5,186" fill="none" stroke="#141414" stroke-width="2.3" stroke-linejoin="miter"/><path d="M539.8,172.5 L545.5,169 L545.5,186" fill="none" stroke="#141414" stroke-width="2.3" stroke-linejoin="miter"/><polyline points="492,176 497.0,182 502,176" fill="none" stroke="#333333" stroke-width="2.5" stroke-linecap="round" stroke-linejoin="round"/><polyline points="604,176 609.0,182 614,176" fill="none" stroke="#333333" stroke-width="2.5" stroke-linecap="round" stroke-linejoin="round"/><path d="M639,187.5 L649,162.5 L659,187.5 M642.5,179 L655.5,179" fill="none" stroke="#333" stroke-width="1.5"/><polyline points="659,169 663,164.5 667,169" fill="none" stroke="#1688d4" stroke-width="1.7"/><path d="M694,187.5 L702,168 L710,187.5 M697,180.5 L707,180.5" fill="none" stroke="#333" stroke-width="1.5"/><polyline points="711,164.5 715,169 719,164.5" fill="none" stroke="#1688d4" stroke-width="1.7"/><polyline points="389,239.5 394.25,246.0 399.5,239.5" fill="none" stroke="#333333" stroke-width="2.5" stroke-linecap="round" stroke-linejoin="round"/><rect x="449" y="227" width="28" height="27" fill="#f8f8f8" stroke="#111" stroke-width="1.4" stroke-dasharray="1.5,2"/><line x1="463" y1="227" x2="463" y2="254" stroke="#111" stroke-width="1.4" stroke-dasharray="1.5,2"/><line x1="449" y1="240.5" x2="477" y2="240.5" stroke="#111" stroke-width="1.4" stroke-dasharray="1.5,2"/><rect x="448" y="254" width="30" height="2.2" fill="#111"/><polyline points="495,239.5 500.0,246.0 505,239.5" fill="none" stroke="#333333" stroke-width="2.5" stroke-linecap="round" stroke-linejoin="round"/><path d="M559,240 L570,229 L579,238 L568,249 Z" fill="#f7f7f7" stroke="#333" stroke-width="1.6" stroke-linejoin="round"/><path d="M573,233 L573,228 Q573,226 571.5,226 Q570,226 570,228 L570,233" fill="none" stroke="#333" stroke-width="1.4"/><path d="M577,236 Q582,232 583,238 Q583.5,242 582,246 Q580,240 577,238 Z" fill="#0a5fb4"/><rect x="554" y="250" width="32" height="7.8" fill="#ffff33"/><polyline points="601,239.5 606.0,246.0 611,239.5" fill="none" stroke="#333333" stroke-width="2.5" stroke-linecap="round" stroke-linejoin="round"/><path d="M637.5,248 L646.5,226 L655.5,248 M641,239.5 L652,239.5" fill="none" stroke="#333" stroke-width="1.6"/><rect x="630" y="250" width="32" height="8" fill="#ff0000"/><polyline points="677,239.5 682.0,246.0 687,239.5" fill="none" stroke="#333333" stroke-width="2.5" stroke-linecap="round" stroke-linejoin="round"/><rect x="780" y="162.0" width="28" height="2" fill="#2e2e2e"/><rect x="784" y="170.0" width="20" height="2" fill="#2e2e2e"/><rect x="780" y="178.0" width="28" height="2" fill="#2e2e2e"/><rect x="832" y="167.8" width="28" height="2" fill="#2e2e2e"/><rect x="836" y="176.0" width="20" height="2" fill="#2e2e2e"/><rect x="832" y="184.0" width="28" height="2" fill="#2e2e2e"/><rect x="884" y="176.0" width="28" height="2" fill="#2e2e2e"/><rect x="888" y="184.0" width="20" height="2" fill="#2e2e2e"/><rect x="884" y="192.0" width="28" height="2" fill="#2e2e2e"/><rect x="780" y="228.0" width="28" height="2" fill="#2e2e2e"/><rect x="780" y="236.0" width="20" height="2" fill="#2e2e2e"/><rect x="780" y="244.0" width="28" height="2" fill="#2e2e2e"/><rect x="780" y="252.0" width="20" height="2" fill="#2e2e2e"/><rect x="832" y="228.0" width="28" height="2" fill="#2e2e2e"/><rect x="836" y="236.0" width="20" height="2" fill="#2e2e2e"/><rect x="832" y="244.0" width="28" height="2" fill="#2e2e2e"/><rect x="836" y="252.0" width="20" height="2" fill="#2e2e2e"/><rect x="884" y="228.0" width="28" height="2" fill="#2e2e2e"/><rect x="892" y="236.0" width="20" height="2" fill="#2e2e2e"/><rect x="884" y="244.0" width="28" height="2" fill="#2e2e2e"/><rect x="892" y="252.0" width="20" height="2" fill="#2e2e2e"/><rect x="966" y="228.0" width="28" height="2" fill="#2e2e2e"/><rect x="982" y="236.0" width="12" height="2" fill="#2e2e2e"/><rect x="982" y="244.0" width="12" height="2" fill="#2e2e2e"/><rect x="966" y="252.0" width="28" height="2" fill="#2e2e2e"/><path d="M977,241 L967,241 M971,236.5 L966.5,241 L971,245.5" fill="none" stroke="#1688d4" stroke-width="2"/><rect x="1018" y="228.0" width="28" height="2" fill="#2e2e2e"/><rect x="1034" y="236.0" width="12" height="2" fill="#2e2e2e"/><rect x="1034" y="244.0" width="12" height="2" fill="#2e2e2e"/><rect x="1018" y="252.0" width="28" height="2" fill="#2e2e2e"/><path d="M1018,241 L1029,241 M1024.5,236.5 L1029,241 L1024.5,245.5" fill="none" stroke="#1688d4" stroke-width="2"/><text x="0" y="0" font-family="Liberation Sans" font-size="23.5" fill="#333" transform="translate(969,186.5) rotate(-45)">ab</text><path d="M974,191 L995.5,169.5 M988,170 L995.5,169.5 L995,177" fill="none" stroke="#1688d4" stroke-width="1.8"/><polyline points="1011,176 1016.0,182 1021,176" fill="none" stroke="#333333" stroke-width="2.5" stroke-linecap="round" stroke-linejoin="round"/><text x="1102" y="177" font-family="Liberation Sans" font-size="20" fill="#444">ab</text><text x="1102" y="192" font-family="Liberation Sans" font-size="20" fill="#444">c</text><path d="M1129,178 Q1131,186 1123,187 L1115,187 M1120,182 L1115,187 L1120,192" fill="none" stroke="#1688d4" stroke-width="1.7"/><polyline points="1255,176 1260.0,182 1265,176" fill="none" stroke="#333333" stroke-width="2.5" stroke-linecap="round" stroke-linejoin="round"/><rect x="1099" y="227" width="28" height="28" fill="#fafafa" stroke="#2e2e2e" stroke-width="1.7"/><line x1="1113" y1="227" x2="1113" y2="255" stroke="#6e6a66" stroke-width="1.4"/><rect x="1099" y="232.5" width="28" height="16.5" fill="#fafafa" stroke="#1688d4" stroke-width="1.6"/><path d="M1103,241 L1123,241 M1107,237 L1103,241 L1107,245 M1119,237 L1123,241 L1119,245" fill="none" stroke="#1688d4" stroke-width="1.7"/><polyline points="1313,240 1318.0,246 1323,240" fill="none" stroke="#333333" stroke-width="2.5" stroke-linecap="round" stroke-linejoin="round"/><polyline points="1661,176 1666.0,182 1671,176" fill="none" stroke="#333333" stroke-width="2.5" stroke-linecap="round" stroke-linejoin="round"/><polyline points="1427,239.5 1432.0,246.0 1437,239.5" fill="none" stroke="#333333" stroke-width="2.5" stroke-linecap="round" stroke-linejoin="round"/><path d="M1401,236 Q1400,232.5 1395,232.5 Q1389,232.5 1389,237.5 Q1389,241 1395,242.5 Q1402,244 1402,248 Q1402,252.5 1395,252.5 Q1389.5,252.5 1388.5,248.5" fill="none" stroke="#333" stroke-width="1.7"/><line x1="1395.2" y1="226" x2="1395.2" y2="258" stroke="#333" stroke-width="1.7"/><ellipse cx="1465" cy="235.4" rx="6.6" ry="6.4" fill="none" stroke="#333" stroke-width="1.7"/><ellipse cx="1480.8" cy="249.4" rx="5.8" ry="6.4" fill="none" stroke="#333" stroke-width="1.7"/><line x1="1462.5" y1="256.3" x2="1480.5" y2="227.8" stroke="#333" stroke-width="1.7"/><path d="M1525,230 Q1533,230 1533,239 Q1533,250 1519,255 L1518.5,253.5 Q1526,249.5 1526,244 Q1518,244 1518,237 Q1518,230 1525,230 Z" fill="#333"/><text x="1609.5" y="239" font-family="Liberation Sans" font-size="17" fill="#333">0</text><text x="1593" y="256" font-family="Liberation Sans" font-size="17" fill="#333">.00</text><path d="M1607,234.5 L1591,234.5 M1596,229.5 L1591,234.5 L1596,239.5" fill="none" stroke="#1688d4" stroke-width="1.8"/><text x="1644.5" y="239" font-family="Liberation Sans" font-size="17" fill="#333">.00</text><text x="1657" y="256" font-family="Liberation Sans" font-size="17" fill="#333">.0</text><path d="M1642,248.5 L1659,248.5 M1654,243.5 L1659,248.5 L1654,253.5" fill="none" stroke="#1688d4" stroke-width="1.8"/><rect x="1747" y="161" width="54" height="42" fill="#fafafa"/><line x1="1791" y1="161" x2="1791" y2="203" stroke="#6e6a66" stroke-width="1.6"/><line x1="1747" y1="175" x2="1801" y2="175" stroke="#6e6a66" stroke-width="1.6"/><line x1="1747" y1="189" x2="1801" y2="189" stroke="#6e6a66" stroke-width="1.6"/><rect x="1757" y="161.2" width="24.5" height="14" fill="#ff949a" stroke="#e01010" stroke-width="1.8"/><rect x="1757" y="175.5" width="16.5" height="13" fill="#80bfe8"/><line x1="1757" y1="175.5" x2="1757" y2="188.5" stroke="#0a5cb4" stroke-width="1.8"/><line x1="1773" y1="175.5" x2="1773" y2="188.5" stroke="#0a5cb4" stroke-width="1.8"/><rect x="1757" y="188.8" width="28.5" height="14" fill="#ff949a" stroke="#e01010" stroke-width="1.8"/><rect x="1747" y="161" width="54" height="42" fill="none" stroke="#2a2a2a" stroke-width="1.8"/><polyline points="1817,180 1822.0,186 1827,180" fill="none" stroke="#333333" stroke-width="2.5" stroke-linecap="round" stroke-linejoin="round"/><rect x="1861" y="161" width="54" height="42" fill="#fafafa"/><line x1="1879" y1="161" x2="1879" y2="203" stroke="#6e6a66" stroke-width="1.6"/><line x1="1897" y1="161" x2="1897" y2="203" stroke="#6e6a66" stroke-width="1.6"/><line x1="1861" y1="175" x2="1915" y2="175" stroke="#6e6a66" stroke-width="1.6"/><line x1="1861" y1="189" x2="1915" y2="189" stroke="#6e6a66" stroke-width="1.6"/><rect x="1879.5" y="175.5" width="35.5" height="27.5" fill="#80bde9" stroke="#0b5fb6" stroke-width="1.8"/><line x1="1897" y1="175.5" x2="1897" y2="203" stroke="#0b5fb6" stroke-width="1.6"/><line x1="1879.5" y1="189" x2="1915" y2="189" stroke="#0b5fb6" stroke-width="1.6"/><rect x="1861" y="161" width="54" height="42" fill="none" stroke="#2a2a2a" stroke-width="1.8"/><g transform="translate(0,0)"><path d="M1893,197 L1915.5,175.5 Q1918.5,173 1919.5,175.5 Q1920,178 1918,181 L1896,202 Z" fill="#fafafa" stroke="#f2f2f2" stroke-width="5"/><path d="M1893,197 L1915.5,175.5 Q1918.5,173 1919.5,175.5 Q1920,178 1918,181 L1896,202 Z" fill="#fafafa" stroke="#2e2e2e" stroke-width="1.5"/><path d="M1874.5,208.5 Q1881,208 1883.5,203 Q1886,198.5 1890.5,198.5 Q1896,199 1896,205 Q1895,213 1884,213 Q1878,213 1874.5,208.5 Z" fill="#80bde9" stroke="#0b5fb6" stroke-width="1.6" stroke-linejoin="round"/></g><polyline points="1931,180 1936.0,186 1941,180" fill="none" stroke="#333333" stroke-width="2.5" stroke-linecap="round" stroke-linejoin="round"/><rect x="1961" y="161" width="54" height="42" fill="#fafafa"/><line x1="1971" y1="161" x2="1971" y2="203" stroke="#6e6a66" stroke-width="1.6"/><line x1="2005" y1="161" x2="2005" y2="203" stroke="#6e6a66" stroke-width="1.6"/><line x1="1961" y1="171" x2="2015" y2="171" stroke="#6e6a66" stroke-width="1.6"/><line x1="1961" y1="193" x2="2015" y2="193" stroke="#6e6a66" stroke-width="1.6"/><rect x="1971.5" y="171" width="33.5" height="22" fill="#80bde9" stroke="#0b5fb6" stroke-width="1.8"/><rect x="1961" y="161" width="54" height="42" fill="none" stroke="#2a2a2a" stroke-width="1.8"/><g transform="translate(100,0)"><path d="M1893,197 L1915.5,175.5 Q1918.5,173 1919.5,175.5 Q1920,178 1918,181 L1896,202 Z" fill="#fafafa" stroke="#f2f2f2" stroke-width="5"/><path d="M1893,197 L1915.5,175.5 Q1918.5,173 1919.5,175.5 Q1920,178 1918,181 L1896,202 Z" fill="#fafafa" stroke="#2e2e2e" stroke-width="1.5"/><path d="M1874.5,208.5 Q1881,208 1883.5,203 Q1886,198.5 1890.5,198.5 Q1896,199 1896,205 Q1895,213 1884,213 Q1878,213 1874.5,208.5 Z" fill="#80bde9" stroke="#0b5fb6" stroke-width="1.6" stroke-linejoin="round"/></g><polyline points="2031,180 2036.0,186 2041,180" fill="none" stroke="#333333" stroke-width="2.5" stroke-linecap="round" stroke-linejoin="round"/><rect x="2099" y="161" width="54" height="42" fill="#fafafa"/><line x1="2117" y1="161" x2="2117" y2="203" stroke="#6e6a66" stroke-width="1.6"/><line x1="2135" y1="161" x2="2135" y2="203" stroke="#6e6a66" stroke-width="1.6"/><rect x="2099" y="161" width="54" height="42" fill="none" stroke="#2a2a2a" stroke-width="1.8"/><rect x="2106" y="175" width="51.5" height="14" fill="#80bde9" stroke="#0b5fb6" stroke-width="1.8"/><line x1="2120" y1="175" x2="2120" y2="189" stroke="#0b5fb6" stroke-width="1.6"/><line x1="2138" y1="175" x2="2138" y2="189" stroke="#0b5fb6" stroke-width="1.6"/><path d="M2120,181.8 L2097,181.8" stroke="#f2f2f2" stroke-width="5"/><path d="M2108,168 L2095.5,181.5 L2108,195 M2096,181.5 L2120,181.5" fill="none" stroke="#1688d4" stroke-width="1.7"/><polyline points="2169,179.5 2174.0,186.0 2179,179.5" fill="none" stroke="#333333" stroke-width="2.5" stroke-linecap="round" stroke-linejoin="round"/><rect x="2199" y="161" width="54" height="42" fill="#fafafa"/><line x1="2217" y1="161" x2="2217" y2="203" stroke="#6e6a66" stroke-width="1.6"/><line x1="2235" y1="161" x2="2235" y2="203" stroke="#6e6a66" stroke-width="1.6"/><path d="M2199,175 L2199,161 L2253,161 L2253,175 M2199,189 L2199,203 L2253,203 L2253,189" fill="none" stroke="#2a2a2a" stroke-width="1.8"/><rect x="2195" y="175" width="62" height="14" fill="#f2f2f2"/><path d="M2206.5,175 L2231,175 L2239,182 L2231,189 L2206.5,189 Z" fill="#80bde9" stroke="#0b5fb6" stroke-width="1.8"/><line x1="2220" y1="175" x2="2220" y2="189" stroke="#0b5fb6" stroke-width="1.6"/><path d="M2234,172 L2256,194 M2256,172 L2234,194" stroke="#f2f2f2" stroke-width="4.5"/><path d="M2234,172 L2256,194 M2256,172 L2234,194" stroke="#e83a3a" stroke-width="1.6"/><polyline points="2269,179.5 2274.0,186.0 2279,179.5" fill="none" stroke="#333333" stroke-width="2.5" stroke-linecap="round" stroke-linejoin="round"/><rect x="2299" y="161" width="54" height="42" fill="#fafafa"/><line x1="2313" y1="161" x2="2313" y2="203" stroke="#6e6a66" stroke-width="1.6"/><line x1="2339" y1="161" x2="2339" y2="203" stroke="#6e6a66" stroke-width="1.6"/><line x1="2299" y1="174.8" x2="2353" y2="174.8" stroke="#6e6a66" stroke-width="1.6"/><line x1="2299" y1="188.8" x2="2353" y2="188.8" stroke="#6e6a66" stroke-width="1.6"/><rect x="2313.5" y="175" width="25.5" height="14" fill="#80bde9" stroke="#0b5fb6" stroke-width="1.8"/><rect x="2299" y="161" width="54" height="42" fill="none" stroke="#2a2a2a" stroke-width="1.8"/><path d="M2311,153 L2341,153 M2311,150 L2311,156 M2341,150 L2341,156" stroke="#1688d4" stroke-width="1.6"/><polyline points="2369,179.5 2374.0,186.0 2379,179.5" fill="none" stroke="#333333" stroke-width="2.5" stroke-linecap="round" stroke-linejoin="round"/><path d="M2462,156 L2462,152.5 L2439,152.5 L2451.5,166 L2439,179.3 L2462,179.3 L2462,175.5" fill="none" stroke="#333" stroke-width="1.6" stroke-linejoin="miter"/><polyline points="2479,164 2484.0,170 2489,164" fill="none" stroke="#333333" stroke-width="2.5" stroke-linecap="round" stroke-linejoin="round"/><rect x="2435" y="197.5" width="30" height="25.5" fill="#fafafa" stroke="#333" stroke-width="1.7"/><line x1="2435" y1="201" x2="2465" y2="201" stroke="#333" stroke-width="1.5"/><path d="M2449,204 L2449,219 M2443.5,213.5 L2449,219 L2454.5,213.5" fill="none" stroke="#1688d4" stroke-width="1.6"/><polyline points="2479,208 2484.0,214 2489,208" fill="none" stroke="#333333" stroke-width="2.5" stroke-linecap="round" stroke-linejoin="round"/><path d="M2435,258.5 L2453.5,239.5 L2465,250.5 L2445.5,269.5 Z" fill="#fafafa" stroke="#a32fa3" stroke-width="1.6" stroke-linejoin="miter"/><path d="M2435,258.5 L2440.5,252.8 L2451.5,263.8 L2445.5,269.5 Z" fill="#d98bd8" stroke="#a32fa3" stroke-width="1.6" stroke-linejoin="miter"/><polyline points="2479,252 2484.0,258 2489,252" fill="none" stroke="#333333" stroke-width="2.5" stroke-linecap="round" stroke-linejoin="round"/><path d="M2509.5,179.5 L2518,157 L2526.5,179.5 M2512.5,172 L2523.5,172" fill="none" stroke="#1688d4" stroke-width="1.6"/><path d="M2510,184.5 L2525,184.5 L2509.5,207.5 L2526,207.5" fill="none" stroke="#333" stroke-width="1.6"/><path d="M2533,168.5 L2563.5,168.5 L2563.5,174.5 L2551,185.5 L2551,198.5 L2544,198.5 L2544,185.5 L2533,174.5 Z" fill="#fafafa" stroke="#333" stroke-width="1.6" stroke-linejoin="miter"/><polyline points="2579,180 2584.0,186 2589,180" fill="none" stroke="#333333" stroke-width="2.5" stroke-linecap="round" stroke-linejoin="round"/><circle cx="2643" cy="175" r="19.5" fill="#f7f7f7" stroke="#333" stroke-width="1.8"/><line x1="2629" y1="189" x2="2606.5" y2="211" stroke="#333" stroke-width="1.6"/><polyline points="2679,180 2684.0,186 2689,180" fill="none" stroke="#333333" stroke-width="2.5" stroke-linecap="round" stroke-linejoin="round"/><polygon points="2775,155 2790,155 2776,178.5 2794.5,178.5 2764.5,208.5 2756.5,208.5 2770.5,186.5 2753.5,186.5" fill="#82bfe9" stroke="#0b62b8" stroke-width="1.8" stroke-linejoin="miter"/><polygon points="146,306 160,306 153,295" fill="#666"/><polygon points="146,318 160,318 153,329" fill="#666"/><path d="M202,304 L220,322 M220,304 L202,322" stroke="#cdcdcd" stroke-width="3.2" stroke-linecap="round"/><path d="M257.5,313.5 L266,322 L283,305" fill="none" stroke="#cdcdcd" stroke-width="3.2" stroke-linecap="round" stroke-linejoin="round"/><text x="316" y="322" font-family="Liberation Serif" font-style="italic" font-size="29" fill="#444">fx</text><rect x="360" y="298" width="2" height="30" fill="#e0e0e0"/><polygon points="2858,307 2872,307 2865,318" fill="#666"/><rect x="2268" y="1764" width="26" height="26" rx="2" fill="#fff"/><rect x="2269.8" y="1765.8" width="6.2" height="6.2" fill="#a8a8a8"/><rect x="2269.8" y="1774.0" width="6.2" height="6.2" fill="#a8a8a8"/><rect x="2269.8" y="1782.2" width="6.2" height="6.2" fill="#a8a8a8"/><rect x="2278.0" y="1765.8" width="6.2" height="6.2" fill="#a8a8a8"/><rect x="2278.0" y="1774.0" width="6.2" height="6.2" fill="#a8a8a8"/><rect x="2278.0" y="1782.2" width="6.2" height="6.2" fill="#a8a8a8"/><rect x="2286.2000000000003" y="1765.8" width="6.2" height="6.2" fill="#a8a8a8"/><rect x="2286.2000000000003" y="1774.0" width="6.2" height="6.2" fill="#a8a8a8"/><rect x="2286.2000000000003" y="1782.2" width="6.2" height="6.2" fill="#a8a8a8"/><rect x="2340" y="1765" width="26" height="24.5" rx="1.5" fill="none" stroke="#606060" stroke-width="1.9"/><rect x="2346.5" y="1769.5" width="14" height="16" fill="none" stroke="#606060" stroke-width="1.7"/><line x1="2349.5" y1="1773" x2="2357.5" y2="1773" stroke="#606060" stroke-width="1.6"/><line x1="2349.5" y1="1777" x2="2357.5" y2="1777" stroke="#606060" stroke-width="1.6"/><line x1="2349.5" y1="1781" x2="2357.5" y2="1781" stroke="#606060" stroke-width="1.6"/><rect x="2411" y="1765" width="26" height="24.5" rx="1.5" fill="none" stroke="#606060" stroke-width="1.9"/><path d="M2411,1778.8 L2427.5,1778.8 L2427.5,1765 M2419.5,1765 L2419.5,1778.8" fill="none" stroke="#606060" stroke-width="1.8"/><rect x="2476" y="1775.5" width="16" height="3.2" fill="#555"/><rect x="2508" y="1774" width="196" height="7.5" rx="3.75" fill="#9b9b9b"/><circle cx="2606" cy="1777.5" r="2.5" fill="#cfcfcf"/><circle cx="2588" cy="1777.5" r="11" fill="#fff" stroke="#b8b8b8" stroke-width="0.8"/><path d="M2720,1777.5 L2736,1777.5 M2728,1769.5 L2728,1785.5" stroke="#555" stroke-width="3.2"/></svg>
<div class="t" style="left:2777px;top:1766.00px;font-size:24px;line-height:24px;color:#444;font-weight:normal;font-family:'Liberation Sans', sans-serif;">81%</div>
</body></html>
